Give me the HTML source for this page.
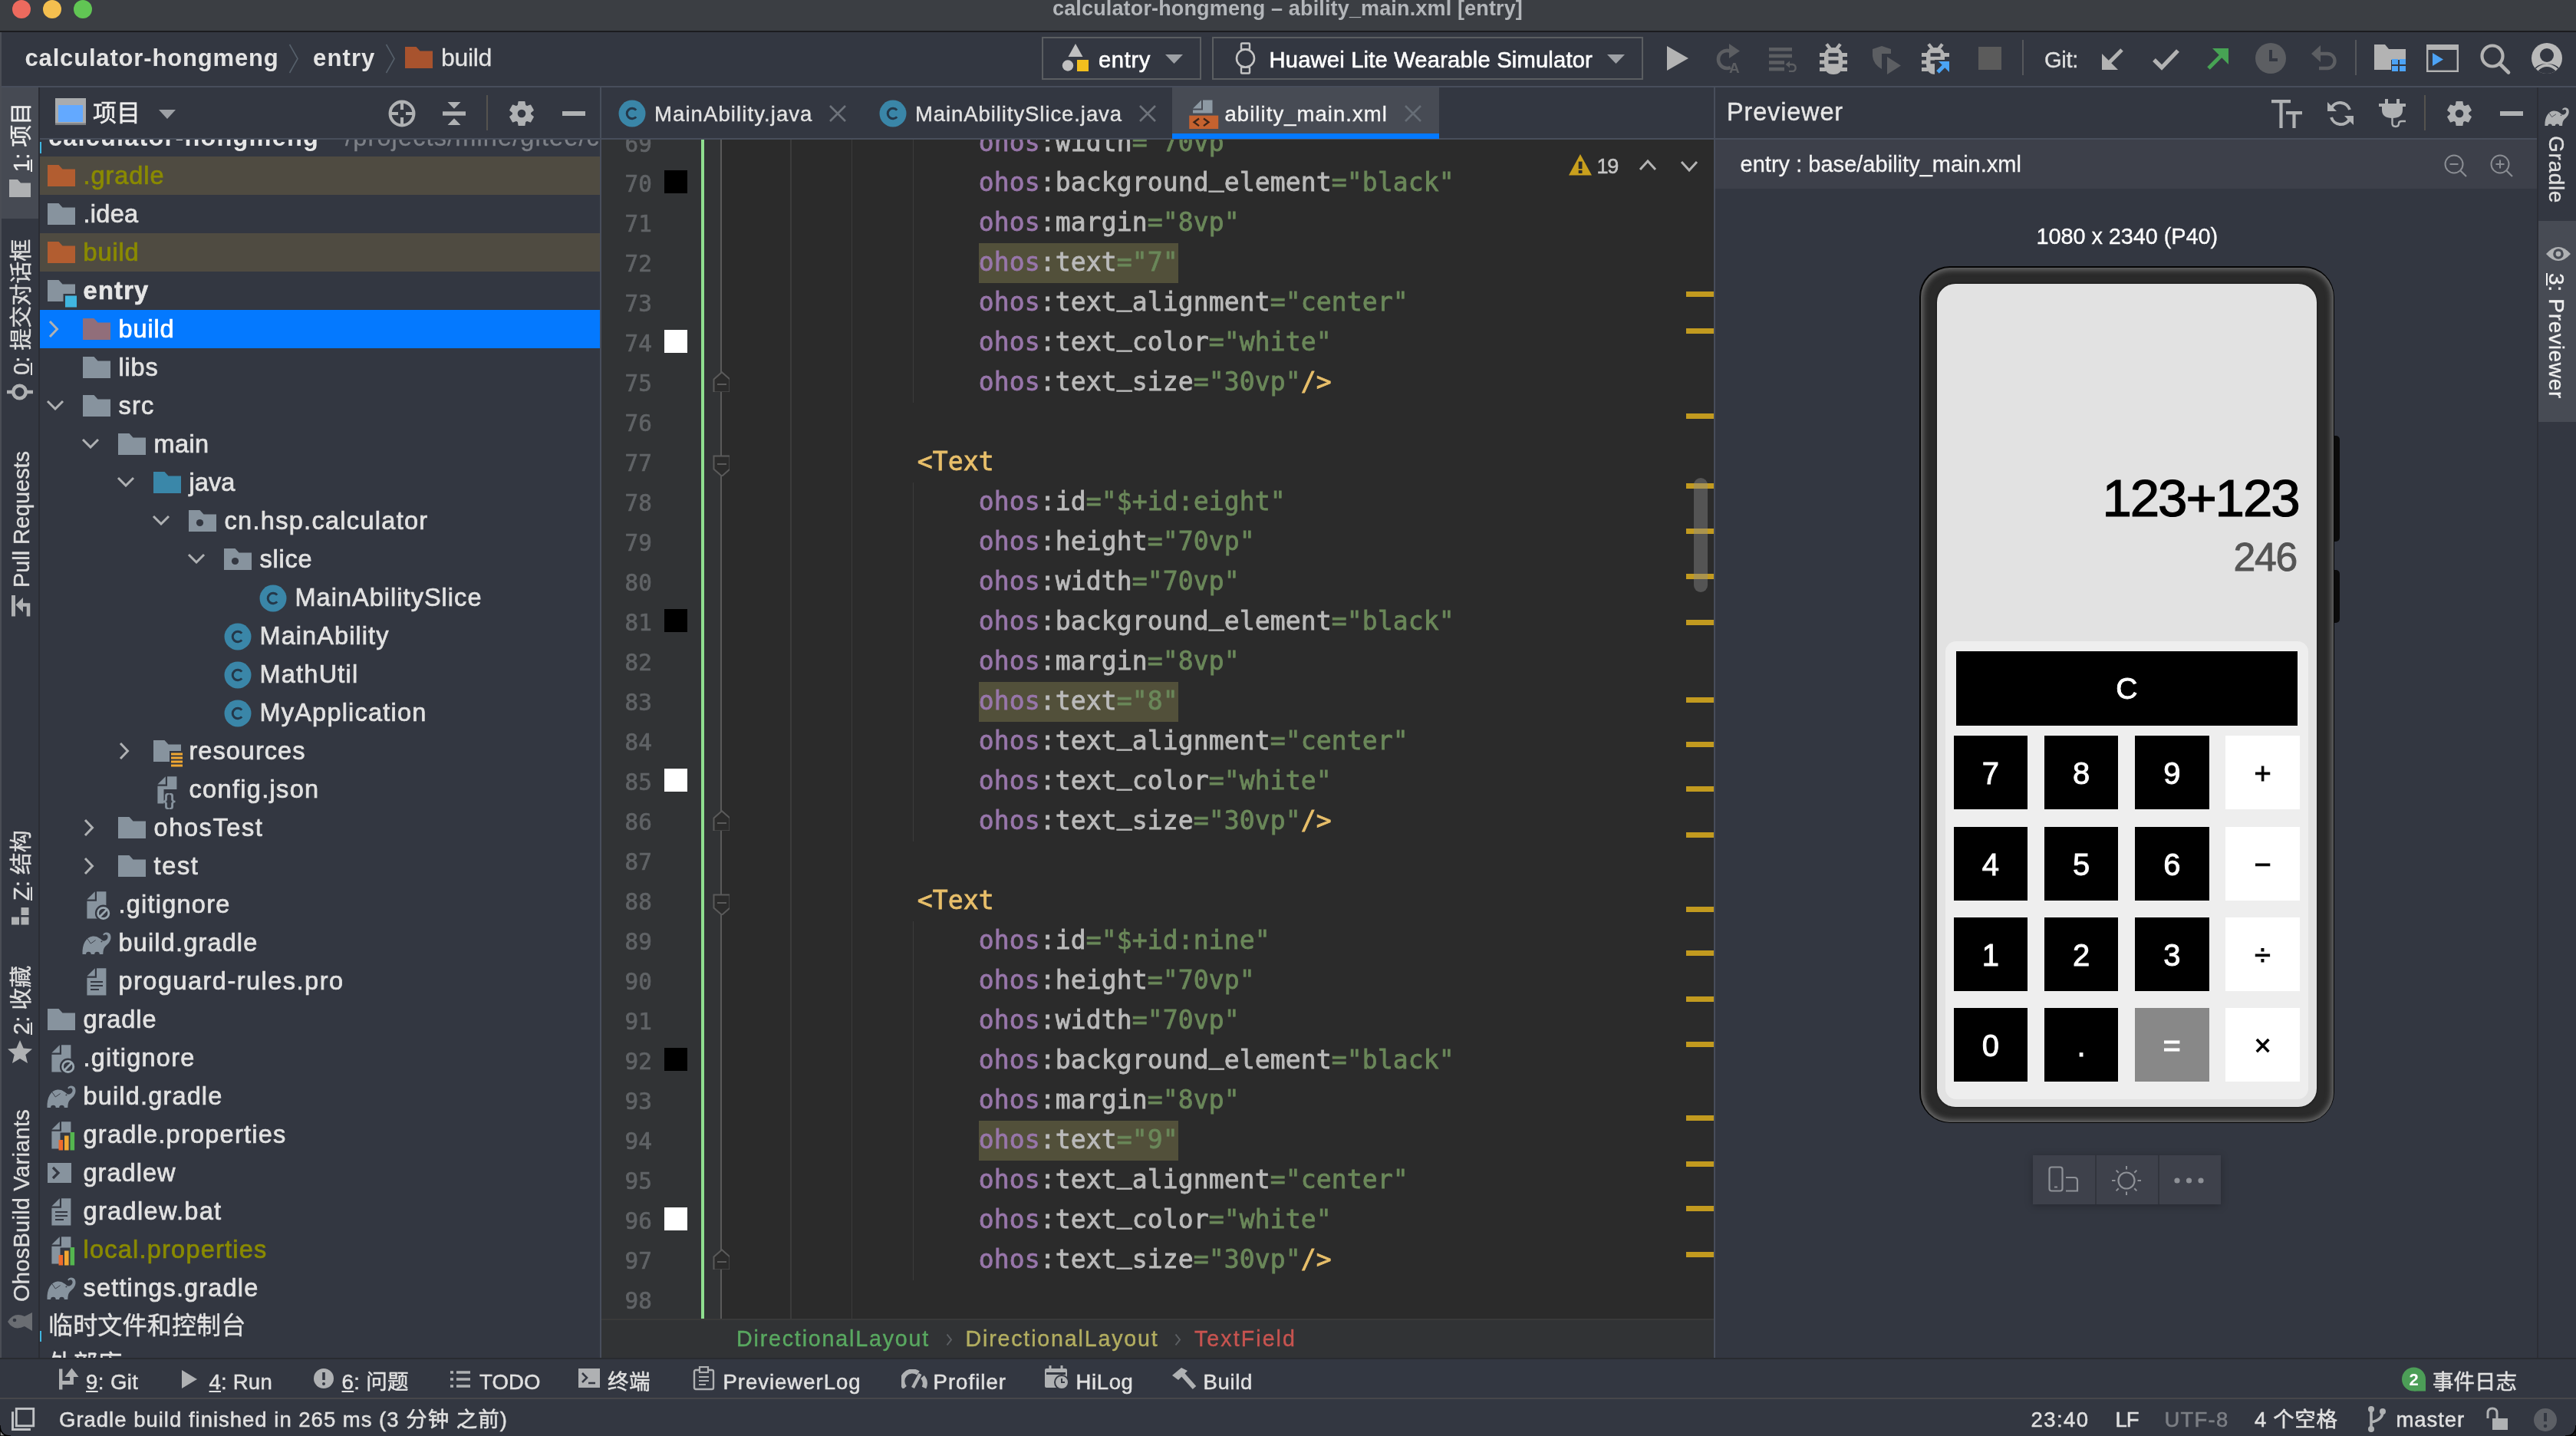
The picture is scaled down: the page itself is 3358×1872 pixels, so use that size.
<!DOCTYPE html>
<html lang="zh-CN"><head><meta charset="utf-8"><title>calculator-hongmeng – ability_main.xml [entry]</title>
<style>
html,body{margin:0;padding:0;background:#333741;}
body{width:3358px;height:1872px;position:relative;overflow:hidden;font-family:'Liberation Sans','Noto Sans CJK SC',sans-serif;will-change:transform;}
div,span,svg{position:absolute;display:block;}
span{white-space:pre;}
span span{position:static;display:inline;}
</style></head><body>
<div style="left:0px;top:0px;width:3358px;height:40px;background:#3b3e43;"></div>
<div style="left:0px;top:40px;width:3358px;height:2px;background:#1b1c1f;"></div>
<div style="left:16px;top:0px;width:24px;height:24px;background:#ec6a5e;border-radius:50%"></div>
<div style="left:56px;top:0px;width:24px;height:24px;background:#f4bf4f;border-radius:50%"></div>
<div style="left:96px;top:0px;width:24px;height:24px;background:#61c554;border-radius:50%"></div>
<span style="letter-spacing:0.149px;left:1372px;top:-7.355499999999999px;font:700 27px/37px 'Liberation Sans','Noto Sans CJK SC',sans-serif;color:#b3b6ba;">calculator-hongmeng – ability_main.xml [entry]</span>
<div style="left:0px;top:42px;width:3358px;height:70px;background:#333741;"></div>
<div style="left:0px;top:112px;width:3358px;height:2px;background:#484e5b;"></div>
<div style="left:0px;top:114px;width:3358px;height:1758px;background:#333741;"></div>
<span style="letter-spacing:0.831px;left:32.5px;top:53.658500000000004px;font:700 31px/43px 'Liberation Sans','Noto Sans CJK SC',sans-serif;color:#e4e4e4;">calculator-hongmeng</span>
<svg style="left:376px;top:56px;" width="14" height="42" viewBox="0 0 14 42"><path d="M1.5 2 L12 20.5 L1.5 39" fill="none" stroke="#56606b" stroke-width="1.6"/></svg>
<span style="letter-spacing:1.137px;left:408px;top:53.658500000000004px;font:700 31px/43px 'Liberation Sans','Noto Sans CJK SC',sans-serif;color:#e4e4e4;">entry</span>
<svg style="left:502px;top:56px;" width="14" height="42" viewBox="0 0 14 42"><path d="M1.5 2 L12 20.5 L1.5 39" fill="none" stroke="#56606b" stroke-width="1.6"/></svg>
<svg style="left:528px;top:61px;" width="36" height="28" viewBox="0 0 36 28"><path d="M0 0 H14.5 L19.5 5.5 H36 V28 H0 Z" fill="#a8532e"/></svg>
<span style="letter-spacing:-0.322px;left:575px;top:52.81200000000001px;font:400 32px/44px 'Liberation Sans','Noto Sans CJK SC',sans-serif;color:#e4e4e4;-webkit-text-stroke:0.3px;">build</span>
<div style="left:1358px;top:48px;width:204px;height:52px;border:2px solid #5b5e61;background:#333741"></div>
<svg style="left:1382px;top:56px;" width="40" height="40" viewBox="0 0 40 40"><path d="M20 1 L29.5 18 H10.5 Z" fill="#c0c0c0"/><circle cx="10" cy="29.5" r="7.2" fill="#c0c0c0"/><rect x="22" y="22" width="15" height="15" fill="#f2bf1e"/></svg>
<span style="letter-spacing:0.622px;left:1432px;top:57.682199999999995px;font:400 29.2px/40px 'Liberation Sans','Noto Sans CJK SC',sans-serif;color:#ffffff;-webkit-text-stroke:0.6px;">entry</span>
<svg style="left:1519px;top:71px;" width="23" height="12" viewBox="0 0 23 12"><path d="M0 0 H23 L11.5 12 Z" fill="#9da0a5"/></svg>
<div style="left:1580px;top:48px;width:558px;height:52px;border:2px solid #5b5e61;background:#333741"></div>
<svg style="left:1608px;top:55px;" width="32" height="42" viewBox="0 0 32 42"><rect x="10" y="1.5" width="11" height="8" rx="1" fill="none" stroke="#c4c4c4" stroke-width="2.4"/><rect x="10" y="32.5" width="11" height="8" rx="1" fill="none" stroke="#c4c4c4" stroke-width="2.4"/><circle cx="15.5" cy="21" r="11.5" fill="#333741" stroke="#c4c4c4" stroke-width="2.6"/></svg>
<span style="letter-spacing:0.170px;left:1654.5px;top:57.682199999999995px;font:400 29.2px/40px 'Liberation Sans','Noto Sans CJK SC',sans-serif;color:#ffffff;-webkit-text-stroke:0.6px;">Huawei Lite Wearable Simulator</span>
<svg style="left:2095px;top:71px;" width="23" height="12" viewBox="0 0 23 12"><path d="M0 0 H23 L11.5 12 Z" fill="#9da0a5"/></svg>
<svg style="left:2172px;top:59px;" width="30" height="34" viewBox="0 0 30 34"><path d="M1 1 L29 17 L1 33 Z" fill="#b3b3b3"/></svg>
<svg style="left:2235px;top:57px;" width="38" height="38" viewBox="0 0 38 38"><path d="M20 9.5 A11.5 11.5 0 1 0 21 31" fill="none" stroke="#5c5e62" stroke-width="4.6"/><path d="M19 0 L33 9.5 L19 19 Z" fill="#5c5e62"/><text x="19" y="38" font-family="Liberation Sans" font-weight="700" font-size="19" fill="#5c5e62">A</text></svg>
<svg style="left:2306px;top:62px;" width="38" height="32" viewBox="0 0 38 32"><rect x="0" y="0" width="30" height="4.6" fill="#5c5e62"/><rect x="0" y="8.6" width="30" height="4.6" fill="#5c5e62"/><rect x="0" y="17.2" width="20" height="4.6" fill="#5c5e62"/><rect x="0" y="25.8" width="20" height="4.6" fill="#5c5e62"/><path d="M25 22 H31 A4.6 4.6 0 0 1 31 31 H26" fill="none" stroke="#5c5e62" stroke-width="2.4"/><path d="M27 17.5 L21.5 22 L27 26.5 Z" fill="#5c5e62"/></svg>
<svg style="left:2372px;top:56px;" width="40" height="42" viewBox="0 0 40 42"><path d="M9 1.5 L14.5 8.5 M27 1.5 L21.5 8.5" stroke="#b3b3b3" stroke-width="4.4" fill="none"/>
<path d="M6 18 Q6 6 18 6 Q30 6 30 18 V27 Q30 41 18 41 Q6 41 6 27 Z" fill="#b3b3b3"/>
<path d="M0 15.5 H8 M0 25 H8 M0 34.5 H8 M28 15.5 H36 M28 25 H36 M28 34.5 H36" stroke="#b3b3b3" stroke-width="5"/>
<rect x="11.5" y="13.2" width="13" height="4.6" fill="#333741"/><rect x="11.5" y="22.6" width="13" height="4.6" fill="#333741"/></svg>
<svg style="left:2440px;top:60px;" width="40" height="38" viewBox="0 0 40 38"><path d="M1 4 L13 0 L25 4 V10 H13 V30 Q2 24 1 13 Z" fill="#5c5e62"/><path d="M20 14 L38 25.5 L20 37 Z" fill="#5c5e62"/></svg>
<svg style="left:2505px;top:56px;" width="40" height="42" viewBox="0 0 40 42"><path d="M9 1.5 L14.5 8.5 M27 1.5 L21.5 8.5" stroke="#b3b3b3" stroke-width="4.4" fill="none"/>
<path d="M6 18 Q6 6 18 6 Q30 6 30 18 V27 Q30 41 18 41 Q6 41 6 27 Z" fill="#b3b3b3"/>
<path d="M0 15.5 H8 M0 25 H8 M0 34.5 H8 M28 15.5 H36 M28 25 H36 M28 34.5 H36" stroke="#b3b3b3" stroke-width="5"/>
<rect x="11.5" y="13.2" width="13" height="4.6" fill="#333741"/><rect x="11.5" y="22.6" width="13" height="4.6" fill="#333741"/><rect x="17" y="22" width="22" height="22" fill="#333741"/><path d="M21 38 L30 29" fill="none" stroke="#4aa4f5" stroke-width="5"/><path d="M22 24 H36 V38 Z" fill="#4aa4f5"/></svg>
<div style="left:2579px;top:61px;width:30px;height:30px;background:#5b5b5b;"></div>
<div style="left:2636px;top:52px;width:2px;height:46px;background:#55575b;"></div>
<span style="letter-spacing:-0.352px;left:2665px;top:57.682199999999995px;font:400 29.2px/40px 'Liberation Sans','Noto Sans CJK SC',sans-serif;color:#e0e0e0;-webkit-text-stroke:0.3px;">Git:</span>
<svg style="left:2739px;top:62px;" width="30" height="30" viewBox="0 0 30 30"><path d="M27 3 L7 23" stroke="#b3b3b3" stroke-width="5" fill="none"/><path d="M1 8 V29 H22 Z" fill="#b3b3b3"/></svg>
<svg style="left:2806px;top:63px;" width="35" height="29" viewBox="0 0 35 29"><path d="M2 15 L12 25 L33 3" fill="none" stroke="#b3b3b3" stroke-width="5.4"/></svg>
<svg style="left:2876px;top:62px;" width="30" height="30" viewBox="0 0 30 30"><path d="M3 27 L23 7" stroke="#47a354" stroke-width="5" fill="none"/><path d="M8 1 H29 V22 Z" fill="#47a354"/></svg>
<svg style="left:2939px;top:55px;" width="42" height="42" viewBox="0 0 42 42"><circle cx="21" cy="21" r="20" fill="#5c5e62"/><path d="M21 10 V23 H30" fill="none" stroke="#333741" stroke-width="4"/></svg>
<svg style="left:3013px;top:59px;" width="34" height="34" viewBox="0 0 34 34"><path d="M8 11 H21 A9.5 9.5 0 0 1 21 30 H10" fill="none" stroke="#5c5e62" stroke-width="4.4"/><path d="M12 0 L0 11 L12 22 Z" fill="#5c5e62"/></svg>
<div style="left:3070px;top:52px;width:2px;height:46px;background:#55575b;"></div>
<svg style="left:3095px;top:58px;" width="42" height="36" viewBox="0 0 42 36"><path d="M0 0 H14 L19 6 H41 V20 H22 V33 H0 Z" fill="#b3b3b3"/><rect x="23" y="19" width="8" height="7" fill="#4da3f5"/><rect x="33" y="19" width="8" height="7" fill="#4da3f5"/><rect x="23" y="28" width="8" height="7" fill="#4da3f5"/><rect x="33" y="28" width="8" height="7" fill="#4da3f5"/></svg>
<svg style="left:3163px;top:58px;" width="42" height="36" viewBox="0 0 42 36"><rect x="1.2" y="1.2" width="39.6" height="33.6" fill="none" stroke="#b3b3b3" stroke-width="2.4"/><rect x="1" y="1" width="40" height="6" fill="#b3b3b3"/><path d="M8 11 L22 19.5 L8 28 Z" fill="#4da3f5"/></svg>
<svg style="left:3230px;top:56px;" width="44" height="42" viewBox="0 0 44 42"><circle cx="19" cy="17" r="13.5" fill="none" stroke="#b3b3b3" stroke-width="4.2"/><path d="M28.5 27 L40 38.5" stroke="#b3b3b3" stroke-width="4.6" stroke-linecap="round"/></svg>
<svg style="left:3299px;top:55px;" width="42" height="42" viewBox="0 0 42 42"><defs><clipPath id="avc"><circle cx="21" cy="21" r="20"/></clipPath></defs><circle cx="21" cy="21" r="20" fill="#b9b9b9"/><g clip-path="url(#avc)"><circle cx="21" cy="17" r="9" fill="#333741"/><path d="M1 44 Q3 28 21 28 Q39 28 41 44 Z" fill="#333741"/><path d="M8 36 Q21 24 34 36" fill="none" stroke="#b9b9b9" stroke-width="4"/></g></svg>
<div style="left:0px;top:114px;width:50px;height:1658px;background:#333741;"></div>
<div style="left:50px;top:114px;width:2px;height:1658px;background:#2a2c33;"></div>
<div style="left:0px;top:114px;width:50px;height:171px;background:#464a53;"></div>
<div style="left:0px;top:42px;width:2px;height:1830px;background:#4a4d55;"></div>
<span style="left:10px;top:224px;font:400 29px/37px 'Liberation Sans','Noto Sans CJK SC',sans-serif;color:#ececec;transform-origin:0 0;transform:rotate(-90deg);-webkit-text-stroke:0.35px;"><u>1</u>: 项目</span>
<svg style="left:12px;top:234px;" width="28" height="23" viewBox="0 0 28 23"><path d="M0 0 H11 L15 4.5 H28 V23 H0 Z" fill="#afb1b3"/></svg>
<span style="left:10px;top:489px;font:400 29px/37px 'Liberation Sans','Noto Sans CJK SC',sans-serif;color:#dcdcdc;transform-origin:0 0;transform:rotate(-90deg);-webkit-text-stroke:0.35px;"><u>0</u>: 提交对话框</span>
<svg style="left:9px;top:495px;" width="34" height="32" viewBox="0 0 34 32"><path d="M0 16 H34" stroke="#afb1b3" stroke-width="4.4"/><circle cx="16.5" cy="16" r="8.2" fill="#333741" stroke="#afb1b3" stroke-width="4.6"/></svg>
<span style="letter-spacing:-0.072px;left:10px;top:766px;font:400 29px/37px 'Liberation Sans','Noto Sans CJK SC',sans-serif;color:#dcdcdc;transform-origin:0 0;transform:rotate(-90deg);-webkit-text-stroke:0.35px;">Pull Requests</span>
<svg style="left:15px;top:776px;" width="25" height="28" viewBox="0 0 25 28"><rect x="0" y="0" width="5" height="27.5" fill="#afb1b3"/><path d="M22 27.5 V12.5 H14" fill="none" stroke="#afb1b3" stroke-width="4.6"/><path d="M15 3 V22 L5.5 12.5 Z" fill="#afb1b3"/></svg>
<span style="left:10px;top:1174px;font:400 29px/37px 'Liberation Sans','Noto Sans CJK SC',sans-serif;color:#dcdcdc;transform-origin:0 0;transform:rotate(-90deg);-webkit-text-stroke:0.35px;"><u>Z</u>: 结构</span>
<svg style="left:15px;top:1183px;" width="24" height="24" viewBox="0 0 24 24"><rect x="12.5" y="0" width="10" height="10" fill="#afb1b3"/><rect x="0" y="12.5" width="10" height="10" fill="#afb1b3"/><rect x="12.5" y="12.5" width="10" height="10" fill="#afb1b3"/></svg>
<span style="left:10px;top:1349px;font:400 29px/37px 'Liberation Sans','Noto Sans CJK SC',sans-serif;color:#dcdcdc;transform-origin:0 0;transform:rotate(-90deg);-webkit-text-stroke:0.35px;"><u>2</u>: 收藏</span>
<svg style="left:10px;top:1356px;" width="32" height="30" viewBox="0 0 32 30"><path d="M16 0 L20.6 10.5 L32 11.5 L23.3 19 L26 30 L16 24 L6 30 L8.7 19 L0 11.5 L11.4 10.5 Z" fill="#afb1b3"/></svg>
<span style="letter-spacing:0.273px;left:10px;top:1697px;font:400 29px/37px 'Liberation Sans','Noto Sans CJK SC',sans-serif;color:#dcdcdc;transform-origin:0 0;transform:rotate(-90deg);-webkit-text-stroke:0.35px;">OhosBuild Variants</span>
<svg style="left:8px;top:1708px;" width="36" height="30" viewBox="0 0 36 30"><path d="M2 15 Q10 2 24 8 L34 3 V27 L24 21 Q10 28 2 15 Z" fill="#6a6d72"/><circle cx="11" cy="13" r="2.3" fill="#333741"/></svg>
<div style="left:782px;top:114px;width:2px;height:1658px;background:#484e5b;"></div>
<div style="left:52px;top:180px;width:730px;height:2px;background:#484e5b;"></div>
<svg style="left:72px;top:128px;" width="40" height="35" viewBox="0 0 40 35"><rect x="0" y="0" width="40" height="35" fill="#a9abad"/><rect x="4" y="9" width="32" height="22" fill="#63a9ff"/><rect x="0" y="32.5" width="40" height="2.5" fill="#7c7e81"/></svg>
<span style="left:121px;top:126.0px;font:400 31px/43px 'Liberation Sans','Noto Sans CJK SC',sans-serif;color:#ececec;-webkit-text-stroke:0.5px;">项目</span>
<svg style="left:207px;top:143px;" width="22" height="12" viewBox="0 0 22 12"><path d="M0 0 H22 L11.0 12 Z" fill="#9da0a5"/></svg>
<svg style="left:506px;top:130px;" width="36" height="36" viewBox="0 0 36 36"><circle cx="18" cy="18" r="15.4" fill="none" stroke="#afb1b3" stroke-width="4.1"/><path d="M18 3 V13 M18 23 V33 M3 18 H13 M23 18 H33" stroke="#afb1b3" stroke-width="4.1"/></svg>
<svg style="left:577px;top:132px;" width="30" height="32" viewBox="0 0 30 32"><path d="M6.5 1 H23.5 L15 9.8 Z M6.5 31 H23.5 L15 22.2 Z" fill="#afb1b3"/><rect x="0" y="13.3" width="30" height="5.4" fill="#afb1b3"/></svg>
<div style="left:634px;top:124px;width:2px;height:46px;background:#55534f;"></div>
<svg style="left:663.8px;top:132.1px;" width="32" height="32" viewBox="0 0 32 32"><path d="M12.34 0.73 L19.66 0.73 L20.44 5.50 L22.87 6.91 L27.40 5.20 L31.05 11.53 L27.31 14.59 L27.31 17.41 L31.05 20.47 L27.40 26.80 L22.87 25.09 L20.44 26.50 L19.66 31.27 L12.34 31.27 L11.56 26.50 L9.13 25.09 L4.60 26.80 L0.95 20.47 L4.69 17.41 L4.69 14.59 L0.95 11.53 L4.60 5.20 L9.13 6.91 L11.56 5.50 Z" fill="#afb1b3" stroke="#afb1b3" stroke-width="1.6" stroke-linejoin="round"/><circle cx="16" cy="16" r="5.3" fill="#333741"/></svg>
<div style="left:733px;top:145.2px;width:30px;height:5.5px;background:#afb1b3;"></div>
<div style="left:52px;top:182px;width:730px;height:1590px;overflow:hidden">
<span style="letter-spacing:1.187px;left:11px;top:-25.061249999999994px;font:700 32.5px/45px 'Liberation Sans','Noto Sans CJK SC',sans-serif;color:#e6e6e6;">calculator-hongmeng</span>
<span style="letter-spacing:1.127px;left:378px;top:-25.061249999999994px;font:400 32.5px/45px 'Liberation Sans','Noto Sans CJK SC',sans-serif;color:#7d8087;-webkit-text-stroke:0.3px;">~/projects/mine/gitee/c</span>
<div style="left:0px;top:22px;width:730px;height:50px;background:#4f4b41;"></div>
<svg style="left:10px;top:33px;" width="36" height="28" viewBox="0 0 36 28"><path d="M0 0 H14.5 L19.5 5.5 H36 V28 H0 Z" fill="#b25d30"/></svg>
<span style="letter-spacing:0.946px;left:56.5px;top:24.938750000000006px;font:400 32.5px/45px 'Liberation Sans','Noto Sans CJK SC',sans-serif;color:#8a8a00;-webkit-text-stroke:0.7px;">.gradle</span>
<svg style="left:10px;top:83px;" width="36" height="28" viewBox="0 0 36 28"><path d="M0 0 H14.5 L19.5 5.5 H36 V28 H0 Z" fill="#87939e"/></svg>
<span style="letter-spacing:0.303px;left:56.5px;top:74.93875px;font:400 32.5px/45px 'Liberation Sans','Noto Sans CJK SC',sans-serif;color:#e2e2e2;-webkit-text-stroke:0.7px;">.idea</span>
<div style="left:0px;top:122px;width:730px;height:50px;background:#4f4b41;"></div>
<svg style="left:10px;top:133px;" width="36" height="28" viewBox="0 0 36 28"><path d="M0 0 H14.5 L19.5 5.5 H36 V28 H0 Z" fill="#b25d30"/></svg>
<span style="letter-spacing:0.866px;left:56.5px;top:124.93875px;font:400 32.5px/45px 'Liberation Sans','Noto Sans CJK SC',sans-serif;color:#8a8a00;-webkit-text-stroke:0.7px;">build</span>
<svg style="left:10px;top:183px;" width="40" height="36" viewBox="0 0 40 36"><path d="M0 0 H14.5 L19.5 5.5 H36 V18 H20.5 V28 H0 Z" fill="#87939e"/><rect x="23" y="20.5" width="15" height="15" fill="#40b6e0"/></svg>
<span style="letter-spacing:1.303px;left:56.5px;top:174.93875px;font:700 32.5px/45px 'Liberation Sans','Noto Sans CJK SC',sans-serif;color:#e6e6e6;-webkit-text-stroke:0.7px;">entry</span>
<div style="left:0px;top:222px;width:730px;height:50px;background:#0479ff;"></div>
<svg style="left:11px;top:235px;" width="14" height="24" viewBox="0 0 14 24"><path d="M2 2 L11.5 12 L2 22" fill="none" stroke="#afb1b3" stroke-width="3"/></svg>
<svg style="left:56px;top:233px;" width="36" height="28" viewBox="0 0 36 28"><path d="M0 0 H14.5 L19.5 5.5 H36 V28 H0 Z" fill="#916e7a"/></svg>
<span style="letter-spacing:0.866px;left:102.5px;top:224.93875px;font:400 32.5px/45px 'Liberation Sans','Noto Sans CJK SC',sans-serif;color:#ffffff;-webkit-text-stroke:0.7px;">build</span>
<svg style="left:56px;top:283px;" width="36" height="28" viewBox="0 0 36 28"><path d="M0 0 H14.5 L19.5 5.5 H36 V28 H0 Z" fill="#87939e"/></svg>
<span style="letter-spacing:0.805px;left:102.5px;top:274.93874999999997px;font:400 32.5px/45px 'Liberation Sans','Noto Sans CJK SC',sans-serif;color:#e2e2e2;-webkit-text-stroke:0.7px;">libs</span>
<svg style="left:8px;top:338.5px;" width="24" height="14" viewBox="0 0 24 14"><path d="M2 2 L12 12 L22 2" fill="none" stroke="#afb1b3" stroke-width="3"/></svg>
<svg style="left:56px;top:333px;" width="36" height="28" viewBox="0 0 36 28"><path d="M0 0 H14.5 L19.5 5.5 H36 V28 H0 Z" fill="#87939e"/></svg>
<span style="letter-spacing:1.224px;left:102.5px;top:324.93874999999997px;font:400 32.5px/45px 'Liberation Sans','Noto Sans CJK SC',sans-serif;color:#e2e2e2;-webkit-text-stroke:0.7px;">src</span>
<svg style="left:54px;top:388.5px;" width="24" height="14" viewBox="0 0 24 14"><path d="M2 2 L12 12 L22 2" fill="none" stroke="#afb1b3" stroke-width="3"/></svg>
<svg style="left:102px;top:383px;" width="36" height="28" viewBox="0 0 36 28"><path d="M0 0 H14.5 L19.5 5.5 H36 V28 H0 Z" fill="#87939e"/></svg>
<span style="letter-spacing:0.387px;left:148.5px;top:374.93874999999997px;font:400 32.5px/45px 'Liberation Sans','Noto Sans CJK SC',sans-serif;color:#e2e2e2;-webkit-text-stroke:0.7px;">main</span>
<svg style="left:100px;top:438.5px;" width="24" height="14" viewBox="0 0 24 14"><path d="M2 2 L12 12 L22 2" fill="none" stroke="#afb1b3" stroke-width="3"/></svg>
<svg style="left:148px;top:433px;" width="36" height="28" viewBox="0 0 36 28"><path d="M0 0 H14.5 L19.5 5.5 H36 V28 H0 Z" fill="#3a87a9"/></svg>
<span style="letter-spacing:0.094px;left:194.5px;top:424.93874999999997px;font:400 32.5px/45px 'Liberation Sans','Noto Sans CJK SC',sans-serif;color:#e2e2e2;-webkit-text-stroke:0.7px;">java</span>
<svg style="left:146px;top:488.5px;" width="24" height="14" viewBox="0 0 24 14"><path d="M2 2 L12 12 L22 2" fill="none" stroke="#afb1b3" stroke-width="3"/></svg>
<svg style="left:194px;top:483px;" width="36" height="28" viewBox="0 0 36 28"><path d="M0 0 H14.5 L19.5 5.5 H36 V28 H0 Z" fill="#87939e"/><circle cx="14.5" cy="16.5" r="4.6" fill="#333741"/></svg>
<span style="letter-spacing:1.301px;left:240.5px;top:474.93874999999997px;font:400 32.5px/45px 'Liberation Sans','Noto Sans CJK SC',sans-serif;color:#e2e2e2;-webkit-text-stroke:0.7px;">cn.hsp.calculator</span>
<svg style="left:192px;top:538.5px;" width="24" height="14" viewBox="0 0 24 14"><path d="M2 2 L12 12 L22 2" fill="none" stroke="#afb1b3" stroke-width="3"/></svg>
<svg style="left:240px;top:533px;" width="36" height="28" viewBox="0 0 36 28"><path d="M0 0 H14.5 L19.5 5.5 H36 V28 H0 Z" fill="#87939e"/><circle cx="14.5" cy="16.5" r="4.6" fill="#333741"/></svg>
<span style="letter-spacing:0.794px;left:286.5px;top:524.93875px;font:400 32.5px/45px 'Liberation Sans','Noto Sans CJK SC',sans-serif;color:#e2e2e2;-webkit-text-stroke:0.7px;">slice</span>
<svg style="left:286px;top:580px;" width="36" height="36" viewBox="0 0 36 36"><circle cx="18" cy="18" r="17.5" fill="#3a86a8"/><path d="M23.2 13.6 A6.8 6.8 0 1 0 23.2 22.4" fill="none" stroke="#24384a" stroke-width="3"/></svg>
<span style="letter-spacing:1.025px;left:332.5px;top:574.93875px;font:400 32.5px/45px 'Liberation Sans','Noto Sans CJK SC',sans-serif;color:#e2e2e2;-webkit-text-stroke:0.7px;">MainAbilitySlice</span>
<svg style="left:240px;top:630px;" width="36" height="36" viewBox="0 0 36 36"><circle cx="18" cy="18" r="17.5" fill="#3a86a8"/><path d="M23.2 13.6 A6.8 6.8 0 1 0 23.2 22.4" fill="none" stroke="#24384a" stroke-width="3"/></svg>
<span style="letter-spacing:1.078px;left:286.5px;top:624.93875px;font:400 32.5px/45px 'Liberation Sans','Noto Sans CJK SC',sans-serif;color:#e2e2e2;-webkit-text-stroke:0.7px;">MainAbility</span>
<svg style="left:240px;top:680px;" width="36" height="36" viewBox="0 0 36 36"><circle cx="18" cy="18" r="17.5" fill="#3a86a8"/><path d="M23.2 13.6 A6.8 6.8 0 1 0 23.2 22.4" fill="none" stroke="#24384a" stroke-width="3"/></svg>
<span style="letter-spacing:1.225px;left:286.5px;top:674.93875px;font:400 32.5px/45px 'Liberation Sans','Noto Sans CJK SC',sans-serif;color:#e2e2e2;-webkit-text-stroke:0.7px;">MathUtil</span>
<svg style="left:240px;top:730px;" width="36" height="36" viewBox="0 0 36 36"><circle cx="18" cy="18" r="17.5" fill="#3a86a8"/><path d="M23.2 13.6 A6.8 6.8 0 1 0 23.2 22.4" fill="none" stroke="#24384a" stroke-width="3"/></svg>
<span style="letter-spacing:1.206px;left:286.5px;top:724.93875px;font:400 32.5px/45px 'Liberation Sans','Noto Sans CJK SC',sans-serif;color:#e2e2e2;-webkit-text-stroke:0.7px;">MyApplication</span>
<svg style="left:103px;top:785px;" width="14" height="24" viewBox="0 0 14 24"><path d="M2 2 L11.5 12 L2 22" fill="none" stroke="#afb1b3" stroke-width="3"/></svg>
<svg style="left:148px;top:783px;" width="40" height="36" viewBox="0 0 40 36"><path d="M0 0 H14.5 L19.5 5.5 H36 V14 H21 V28 H0 Z" fill="#87939e"/><path d="M23 18 H38 M23 23 H38 M23 28 H38 M23 33 H38" stroke="#f0a732" stroke-width="3"/></svg>
<span style="letter-spacing:1.033px;left:194.5px;top:774.93875px;font:400 32.5px/45px 'Liberation Sans','Noto Sans CJK SC',sans-serif;color:#e2e2e2;-webkit-text-stroke:0.7px;">resources</span>
<svg style="left:148px;top:822px;" width="42" height="52" viewBox="0 0 42 52"><path d="M5.4 18.6 L15.8 8.2 V18.6 Z" fill="#87939e"/><path d="M18 8.2 H30.4 V25 H13.5 V43.6 H5.4 V20.8 H18 Z" fill="#87939e"/><text x="12.2" y="45.5" font-family="Liberation Sans" font-weight="700" font-size="22" letter-spacing="-0.5" fill="#87939e">{}</text></svg>
<span style="letter-spacing:1.330px;left:194.5px;top:824.93875px;font:400 32.5px/45px 'Liberation Sans','Noto Sans CJK SC',sans-serif;color:#e2e2e2;-webkit-text-stroke:0.7px;">config.json</span>
<svg style="left:57px;top:885px;" width="14" height="24" viewBox="0 0 14 24"><path d="M2 2 L11.5 12 L2 22" fill="none" stroke="#afb1b3" stroke-width="3"/></svg>
<svg style="left:102px;top:883px;" width="36" height="28" viewBox="0 0 36 28"><path d="M0 0 H14.5 L19.5 5.5 H36 V28 H0 Z" fill="#87939e"/></svg>
<span style="letter-spacing:1.613px;left:148.5px;top:874.93875px;font:400 32.5px/45px 'Liberation Sans','Noto Sans CJK SC',sans-serif;color:#e2e2e2;-webkit-text-stroke:0.7px;">ohosTest</span>
<svg style="left:57px;top:935px;" width="14" height="24" viewBox="0 0 14 24"><path d="M2 2 L11.5 12 L2 22" fill="none" stroke="#afb1b3" stroke-width="3"/></svg>
<svg style="left:102px;top:933px;" width="36" height="28" viewBox="0 0 36 28"><path d="M0 0 H14.5 L19.5 5.5 H36 V28 H0 Z" fill="#87939e"/></svg>
<span style="letter-spacing:1.652px;left:148.5px;top:924.93875px;font:400 32.5px/45px 'Liberation Sans','Noto Sans CJK SC',sans-serif;color:#e2e2e2;-webkit-text-stroke:0.7px;">test</span>
<svg style="left:56px;top:972px;" width="42" height="52" viewBox="0 0 42 52"><path d="M5.4 18.6 L15.8 8.2 V18.6 Z" fill="#87939e"/><path d="M18 8.2 H30.4 V43.6 H5.4 V20.8 H18 Z" fill="#87939e"/><circle cx="26.7" cy="36.4" r="10.8" fill="#333741"/><circle cx="26.7" cy="36.4" r="7.1" fill="none" stroke="#9aa7b0" stroke-width="2.8"/><path d="M21.9 41.2 L31.5 31.6" stroke="#9aa7b0" stroke-width="2.8"/></svg>
<span style="letter-spacing:1.230px;left:102.5px;top:974.93875px;font:400 32.5px/45px 'Liberation Sans','Noto Sans CJK SC',sans-serif;color:#e2e2e2;-webkit-text-stroke:0.7px;">.gitignore</span>
<svg style="left:55px;top:1032.2px;" width="38.5" height="30.5" viewBox="0 -1 38.5 30.5"><path d="M0.5 29 C0 16 5 6.5 14 5.5 C20 5 24 9 27 11.5 C31 12.2 34 9 33.5 5.8 C33 2.8 29.8 2.6 28.6 4.6 L27.2 3.4 C28.5 -0.3 35 -0.8 37 3.8 C39 10 35 15 30.5 18.5 C28 21 27.5 24 27.3 29 L22.8 29 A3.3 3.3 0 0 0 16.2 29 L11.7 29 A3.3 3.3 0 0 0 5.1 29 Z" fill="#87939e"/><circle cx="25.4" cy="12.4" r="0.95" fill="#333741"/><path d="M7 8.8 L11.3 15 L17.6 10.6" fill="none" stroke="#333741" stroke-width="0.9"/></svg>
<span style="letter-spacing:1.163px;left:102.5px;top:1024.93875px;font:400 32.5px/45px 'Liberation Sans','Noto Sans CJK SC',sans-serif;color:#e2e2e2;-webkit-text-stroke:0.7px;">build.gradle</span>
<svg style="left:56px;top:1072px;" width="42" height="52" viewBox="0 0 42 52"><path d="M5.4 18.6 L15.8 8.2 V18.6 Z" fill="#87939e"/><path d="M18 8.2 H30.4 V43.6 H5.4 V20.8 H18 Z" fill="#87939e"/><path d="M10 26 H26 M10 31 H26 M10 36 H21" stroke="#333741" stroke-width="2.2"/></svg>
<span style="letter-spacing:1.479px;left:102.5px;top:1074.93875px;font:400 32.5px/45px 'Liberation Sans','Noto Sans CJK SC',sans-serif;color:#e2e2e2;-webkit-text-stroke:0.7px;">proguard-rules.pro</span>
<svg style="left:10px;top:1133px;" width="36" height="28" viewBox="0 0 36 28"><path d="M0 0 H14.5 L19.5 5.5 H36 V28 H0 Z" fill="#87939e"/></svg>
<span style="letter-spacing:0.943px;left:56.5px;top:1124.93875px;font:400 32.5px/45px 'Liberation Sans','Noto Sans CJK SC',sans-serif;color:#e2e2e2;-webkit-text-stroke:0.7px;">gradle</span>
<svg style="left:10px;top:1172px;" width="42" height="52" viewBox="0 0 42 52"><path d="M5.4 18.6 L15.8 8.2 V18.6 Z" fill="#87939e"/><path d="M18 8.2 H30.4 V43.6 H5.4 V20.8 H18 Z" fill="#87939e"/><circle cx="26.7" cy="36.4" r="10.8" fill="#333741"/><circle cx="26.7" cy="36.4" r="7.1" fill="none" stroke="#9aa7b0" stroke-width="2.8"/><path d="M21.9 41.2 L31.5 31.6" stroke="#9aa7b0" stroke-width="2.8"/></svg>
<span style="letter-spacing:1.230px;left:56.5px;top:1174.93875px;font:400 32.5px/45px 'Liberation Sans','Noto Sans CJK SC',sans-serif;color:#e2e2e2;-webkit-text-stroke:0.7px;">.gitignore</span>
<svg style="left:9px;top:1232.2px;" width="38.5" height="30.5" viewBox="0 -1 38.5 30.5"><path d="M0.5 29 C0 16 5 6.5 14 5.5 C20 5 24 9 27 11.5 C31 12.2 34 9 33.5 5.8 C33 2.8 29.8 2.6 28.6 4.6 L27.2 3.4 C28.5 -0.3 35 -0.8 37 3.8 C39 10 35 15 30.5 18.5 C28 21 27.5 24 27.3 29 L22.8 29 A3.3 3.3 0 0 0 16.2 29 L11.7 29 A3.3 3.3 0 0 0 5.1 29 Z" fill="#87939e"/><circle cx="25.4" cy="12.4" r="0.95" fill="#333741"/><path d="M7 8.8 L11.3 15 L17.6 10.6" fill="none" stroke="#333741" stroke-width="0.9"/></svg>
<span style="letter-spacing:1.163px;left:56.5px;top:1224.93875px;font:400 32.5px/45px 'Liberation Sans','Noto Sans CJK SC',sans-serif;color:#e2e2e2;-webkit-text-stroke:0.7px;">build.gradle</span>
<svg style="left:10px;top:1272px;" width="42" height="52" viewBox="0 0 42 52"><path d="M5.4 18.6 L15.8 8.2 V18.6 Z" fill="#87939e"/><path d="M18 8.2 H30.4 V22.5 H16.5 V43.6 H5.4 V20.8 H18 Z" fill="#87939e"/><rect x="14.5" y="32" width="5.6" height="13.5" fill="#ee6b2d"/><rect x="22" y="26.5" width="5.6" height="19" fill="#f0a732"/><rect x="29.5" y="22" width="5.6" height="23.5" fill="#54b64f"/></svg>
<span style="letter-spacing:1.241px;left:56.5px;top:1274.93875px;font:400 32.5px/45px 'Liberation Sans','Noto Sans CJK SC',sans-serif;color:#e2e2e2;-webkit-text-stroke:0.7px;">gradle.properties</span>
<svg style="left:10px;top:1334px;" width="32" height="26" viewBox="0 0 32 26"><rect x="0" y="0" width="31" height="26" fill="#87939e"/><path d="M7 6 L14 13 L7 20" fill="none" stroke="#333741" stroke-width="3.2"/></svg>
<span style="letter-spacing:1.025px;left:56.5px;top:1324.93875px;font:400 32.5px/45px 'Liberation Sans','Noto Sans CJK SC',sans-serif;color:#e2e2e2;-webkit-text-stroke:0.7px;">gradlew</span>
<svg style="left:10px;top:1372px;" width="42" height="52" viewBox="0 0 42 52"><path d="M5.4 18.6 L15.8 8.2 V18.6 Z" fill="#87939e"/><path d="M18 8.2 H30.4 V43.6 H5.4 V20.8 H18 Z" fill="#87939e"/><path d="M10 26 H26 M10 31 H26 M10 36 H21" stroke="#333741" stroke-width="2.2"/></svg>
<span style="letter-spacing:1.342px;left:56.5px;top:1374.93875px;font:400 32.5px/45px 'Liberation Sans','Noto Sans CJK SC',sans-serif;color:#e2e2e2;-webkit-text-stroke:0.7px;">gradlew.bat</span>
<svg style="left:10px;top:1422px;" width="42" height="52" viewBox="0 0 42 52"><path d="M5.4 18.6 L15.8 8.2 V18.6 Z" fill="#87939e"/><path d="M18 8.2 H30.4 V22.5 H16.5 V43.6 H5.4 V20.8 H18 Z" fill="#87939e"/><rect x="14.5" y="32" width="5.6" height="13.5" fill="#ee6b2d"/><rect x="22" y="26.5" width="5.6" height="19" fill="#f0a732"/><rect x="29.5" y="22" width="5.6" height="23.5" fill="#54b64f"/></svg>
<span style="letter-spacing:1.226px;left:56.5px;top:1424.93875px;font:400 32.5px/45px 'Liberation Sans','Noto Sans CJK SC',sans-serif;color:#8a8a00;-webkit-text-stroke:0.7px;">local.properties</span>
<svg style="left:9px;top:1482.2px;" width="38.5" height="30.5" viewBox="0 -1 38.5 30.5"><path d="M0.5 29 C0 16 5 6.5 14 5.5 C20 5 24 9 27 11.5 C31 12.2 34 9 33.5 5.8 C33 2.8 29.8 2.6 28.6 4.6 L27.2 3.4 C28.5 -0.3 35 -0.8 37 3.8 C39 10 35 15 30.5 18.5 C28 21 27.5 24 27.3 29 L22.8 29 A3.3 3.3 0 0 0 16.2 29 L11.7 29 A3.3 3.3 0 0 0 5.1 29 Z" fill="#87939e"/><circle cx="25.4" cy="12.4" r="0.95" fill="#333741"/><path d="M7 8.8 L11.3 15 L17.6 10.6" fill="none" stroke="#333741" stroke-width="0.9"/></svg>
<span style="letter-spacing:1.174px;left:56.5px;top:1474.93875px;font:400 32.5px/45px 'Liberation Sans','Noto Sans CJK SC',sans-serif;color:#e2e2e2;-webkit-text-stroke:0.7px;">settings.gradle</span>
<span style="left:11px;top:1524.0px;font:400 32.2px/45px 'Liberation Sans','Noto Sans CJK SC',sans-serif;color:#e2e2e2;-webkit-text-stroke:0.35px;">临时文件和控制台</span>
<span style="left:11px;top:1574.0px;font:400 32.2px/45px 'Liberation Sans','Noto Sans CJK SC',sans-serif;color:#e2e2e2;-webkit-text-stroke:0.35px;">外部库</span>
<div style="left:0px;top:3px;width:2px;height:15px;background:#40b6e0;"></div>
<div style="left:0px;top:1553px;width:2px;height:14px;background:#40b6e0;"></div>
</div>
<div style="left:784px;top:180px;width:1450px;height:2px;background:#484e5b;"></div>
<svg style="left:806px;top:130px;" width="36" height="36" viewBox="0 0 36 36"><circle cx="18" cy="18" r="17.5" fill="#3a86a8"/><path d="M23.2 13.6 A6.8 6.8 0 1 0 23.2 22.4" fill="none" stroke="#24384a" stroke-width="3"/></svg>
<span style="letter-spacing:1.093px;left:853px;top:130.07125px;font:400 27.5px/38px 'Liberation Sans','Noto Sans CJK SC',sans-serif;color:#e2e2e2;-webkit-text-stroke:0.4px;">MainAbility.java</span>
<svg style="left:1080.5px;top:137px;" width="22" height="22" viewBox="0 0 22 22"><path d="M1 1 L21 21 M21 1 L1 21" stroke="#6e737b" stroke-width="2.6" fill="none"/></svg>
<svg style="left:1146px;top:130px;" width="36" height="36" viewBox="0 0 36 36"><circle cx="18" cy="18" r="17.5" fill="#3a86a8"/><path d="M23.2 13.6 A6.8 6.8 0 1 0 23.2 22.4" fill="none" stroke="#24384a" stroke-width="3"/></svg>
<span style="letter-spacing:0.921px;left:1193px;top:130.07125px;font:400 27.5px/38px 'Liberation Sans','Noto Sans CJK SC',sans-serif;color:#e2e2e2;-webkit-text-stroke:0.4px;">MainAbilitySlice.java</span>
<svg style="left:1485px;top:137px;" width="22" height="22" viewBox="0 0 22 22"><path d="M1 1 L21 21 M21 1 L1 21" stroke="#6e737b" stroke-width="2.6" fill="none"/></svg>
<div style="left:1528px;top:114px;width:348px;height:66px;background:#474b54;"></div>
<div style="left:1528px;top:174px;width:348px;height:7px;background:#0479ff;"></div>
<svg style="left:1549px;top:128px;" width="40" height="42" viewBox="0 0 40 42"><path d="M6 13.5 L17 2.5 V13.5 Z" fill="#8d99a3"/><path d="M19 2.5 H31.5 V19.5 H6 V15.5 H19 Z" fill="#8d99a3"/><rect x="1.2" y="22.6" width="38" height="17.4" fill="#c5622f"/><path d="M14 26.5 L7.5 31.3 L14 36.1 M20 26.5 L26.5 31.3 L20 36.1" fill="none" stroke="#3b2418" stroke-width="2.3"/></svg>
<span style="letter-spacing:1.055px;left:1596.5px;top:130.07125px;font:400 27.5px/38px 'Liberation Sans','Noto Sans CJK SC',sans-serif;color:#f2f2f2;-webkit-text-stroke:0.4px;">ability_main.xml</span>
<svg style="left:1830.5px;top:137px;" width="22" height="22" viewBox="0 0 22 22"><path d="M1 1 L21 21 M21 1 L1 21" stroke="#666d76" stroke-width="2.6" fill="none"/></svg>
<div style="left:784px;top:182px;width:1450px;height:1537px;overflow:hidden;background:#2b2b2b">
<div style="left:0px;top:0px;width:156px;height:1537px;background:#313335;"></div>
<div style="left:130px;top:0px;width:4px;height:1537px;background:#8fdf8f;"></div>
<div style="left:155px;top:0px;width:2px;height:1537px;background:#5a5a5a;"></div>
<div style="left:246px;top:0px;width:1.6px;height:1537px;background:#3b3b3b;"></div>
<div style="left:325.79999999999995px;top:0px;width:1.6px;height:1537px;background:#3b3b3b;"></div>
<div style="left:405.79999999999995px;top:0px;width:1.6px;height:342.5px;background:#3b3b3b;"></div>
<div style="left:405.79999999999995px;top:446.5px;width:1.6px;height:468.0px;background:#3b3b3b;"></div>
<div style="left:405.79999999999995px;top:1018.5px;width:1.6px;height:468.0px;background:#3b3b3b;"></div>
<span style="left:30.600000000000023px;top:-20.5px;font:400 29.3px/52px 'DejaVu Sans Mono','Liberation Mono',monospace;color:#606366;-webkit-text-stroke:0.7px">69</span>
<span style="left:491.80px;top:-22.5px;font:400 33.04px/52px 'DejaVu Sans Mono','Liberation Mono',monospace;letter-spacing:0.108px;-webkit-text-stroke:0.8px"><span style="color:#9876aa">ohos</span><span style="color:#bababa">:width</span><span style="color:#6a8759">=&quot;70vp&quot;</span></span>
<span style="left:30.600000000000023px;top:31.5px;font:400 29.3px/52px 'DejaVu Sans Mono','Liberation Mono',monospace;color:#606366;-webkit-text-stroke:0.7px">70</span>
<span style="left:491.80px;top:29.5px;font:400 33.04px/52px 'DejaVu Sans Mono','Liberation Mono',monospace;letter-spacing:0.108px;-webkit-text-stroke:0.8px"><span style="color:#9876aa">ohos</span><span style="color:#bababa">:background<span style="position:relative;top:-6.5px">_</span>element</span><span style="color:#6a8759">=&quot;black&quot;</span></span>
<span style="left:30.600000000000023px;top:83.5px;font:400 29.3px/52px 'DejaVu Sans Mono','Liberation Mono',monospace;color:#606366;-webkit-text-stroke:0.7px">71</span>
<span style="left:491.80px;top:81.5px;font:400 33.04px/52px 'DejaVu Sans Mono','Liberation Mono',monospace;letter-spacing:0.108px;-webkit-text-stroke:0.8px"><span style="color:#9876aa">ohos</span><span style="color:#bababa">:margin</span><span style="color:#6a8759">=&quot;8vp&quot;</span></span>
<span style="left:30.600000000000023px;top:135.5px;font:400 29.3px/52px 'DejaVu Sans Mono','Liberation Mono',monospace;color:#606366;-webkit-text-stroke:0.7px">72</span>
<div style="left:491.70000000000005px;top:134.5px;width:260.3px;height:52px;background:#52503a;"></div>
<span style="left:491.80px;top:133.5px;font:400 33.04px/52px 'DejaVu Sans Mono','Liberation Mono',monospace;letter-spacing:0.108px;-webkit-text-stroke:0.8px"><span style="color:#9876aa">ohos</span><span style="color:#bababa">:text</span><span style="color:#6a8759">=&quot;7&quot;</span></span>
<span style="left:30.600000000000023px;top:187.5px;font:400 29.3px/52px 'DejaVu Sans Mono','Liberation Mono',monospace;color:#606366;-webkit-text-stroke:0.7px">73</span>
<span style="left:491.80px;top:185.5px;font:400 33.04px/52px 'DejaVu Sans Mono','Liberation Mono',monospace;letter-spacing:0.108px;-webkit-text-stroke:0.8px"><span style="color:#9876aa">ohos</span><span style="color:#bababa">:text<span style="position:relative;top:-6.5px">_</span>alignment</span><span style="color:#6a8759">=&quot;center&quot;</span></span>
<span style="left:30.600000000000023px;top:239.5px;font:400 29.3px/52px 'DejaVu Sans Mono','Liberation Mono',monospace;color:#606366;-webkit-text-stroke:0.7px">74</span>
<span style="left:491.80px;top:237.5px;font:400 33.04px/52px 'DejaVu Sans Mono','Liberation Mono',monospace;letter-spacing:0.108px;-webkit-text-stroke:0.8px"><span style="color:#9876aa">ohos</span><span style="color:#bababa">:text<span style="position:relative;top:-6.5px">_</span>color</span><span style="color:#6a8759">=&quot;white&quot;</span></span>
<span style="left:30.600000000000023px;top:291.5px;font:400 29.3px/52px 'DejaVu Sans Mono','Liberation Mono',monospace;color:#606366;-webkit-text-stroke:0.7px">75</span>
<span style="left:491.80px;top:289.5px;font:400 33.04px/52px 'DejaVu Sans Mono','Liberation Mono',monospace;letter-spacing:0.108px;-webkit-text-stroke:0.8px"><span style="color:#9876aa">ohos</span><span style="color:#bababa">:text<span style="position:relative;top:-6.5px">_</span>size</span><span style="color:#6a8759">=&quot;30vp&quot;</span><span style="color:#e8bf6a">/&gt;</span></span>
<span style="left:30.600000000000023px;top:343.5px;font:400 29.3px/52px 'DejaVu Sans Mono','Liberation Mono',monospace;color:#606366;-webkit-text-stroke:0.7px">76</span>
<span style="left:30.600000000000023px;top:395.5px;font:400 29.3px/52px 'DejaVu Sans Mono','Liberation Mono',monospace;color:#606366;-webkit-text-stroke:0.7px">77</span>
<span style="left:411.80px;top:393.5px;font:400 33.04px/52px 'DejaVu Sans Mono','Liberation Mono',monospace;letter-spacing:0.108px;-webkit-text-stroke:0.8px"><span style="color:#e8bf6a">&lt;Text</span></span>
<span style="left:30.600000000000023px;top:447.5px;font:400 29.3px/52px 'DejaVu Sans Mono','Liberation Mono',monospace;color:#606366;-webkit-text-stroke:0.7px">78</span>
<span style="left:491.80px;top:445.5px;font:400 33.04px/52px 'DejaVu Sans Mono','Liberation Mono',monospace;letter-spacing:0.108px;-webkit-text-stroke:0.8px"><span style="color:#9876aa">ohos</span><span style="color:#bababa">:id</span><span style="color:#6a8759">=&quot;$+id:eight&quot;</span></span>
<span style="left:30.600000000000023px;top:499.5px;font:400 29.3px/52px 'DejaVu Sans Mono','Liberation Mono',monospace;color:#606366;-webkit-text-stroke:0.7px">79</span>
<span style="left:491.80px;top:497.5px;font:400 33.04px/52px 'DejaVu Sans Mono','Liberation Mono',monospace;letter-spacing:0.108px;-webkit-text-stroke:0.8px"><span style="color:#9876aa">ohos</span><span style="color:#bababa">:height</span><span style="color:#6a8759">=&quot;70vp&quot;</span></span>
<span style="left:30.600000000000023px;top:551.5px;font:400 29.3px/52px 'DejaVu Sans Mono','Liberation Mono',monospace;color:#606366;-webkit-text-stroke:0.7px">80</span>
<span style="left:491.80px;top:549.5px;font:400 33.04px/52px 'DejaVu Sans Mono','Liberation Mono',monospace;letter-spacing:0.108px;-webkit-text-stroke:0.8px"><span style="color:#9876aa">ohos</span><span style="color:#bababa">:width</span><span style="color:#6a8759">=&quot;70vp&quot;</span></span>
<span style="left:30.600000000000023px;top:603.5px;font:400 29.3px/52px 'DejaVu Sans Mono','Liberation Mono',monospace;color:#606366;-webkit-text-stroke:0.7px">81</span>
<span style="left:491.80px;top:601.5px;font:400 33.04px/52px 'DejaVu Sans Mono','Liberation Mono',monospace;letter-spacing:0.108px;-webkit-text-stroke:0.8px"><span style="color:#9876aa">ohos</span><span style="color:#bababa">:background<span style="position:relative;top:-6.5px">_</span>element</span><span style="color:#6a8759">=&quot;black&quot;</span></span>
<span style="left:30.600000000000023px;top:655.5px;font:400 29.3px/52px 'DejaVu Sans Mono','Liberation Mono',monospace;color:#606366;-webkit-text-stroke:0.7px">82</span>
<span style="left:491.80px;top:653.5px;font:400 33.04px/52px 'DejaVu Sans Mono','Liberation Mono',monospace;letter-spacing:0.108px;-webkit-text-stroke:0.8px"><span style="color:#9876aa">ohos</span><span style="color:#bababa">:margin</span><span style="color:#6a8759">=&quot;8vp&quot;</span></span>
<span style="left:30.600000000000023px;top:707.5px;font:400 29.3px/52px 'DejaVu Sans Mono','Liberation Mono',monospace;color:#606366;-webkit-text-stroke:0.7px">83</span>
<div style="left:491.70000000000005px;top:706.5px;width:260.3px;height:52px;background:#52503a;"></div>
<span style="left:491.80px;top:705.5px;font:400 33.04px/52px 'DejaVu Sans Mono','Liberation Mono',monospace;letter-spacing:0.108px;-webkit-text-stroke:0.8px"><span style="color:#9876aa">ohos</span><span style="color:#bababa">:text</span><span style="color:#6a8759">=&quot;8&quot;</span></span>
<span style="left:30.600000000000023px;top:759.5px;font:400 29.3px/52px 'DejaVu Sans Mono','Liberation Mono',monospace;color:#606366;-webkit-text-stroke:0.7px">84</span>
<span style="left:491.80px;top:757.5px;font:400 33.04px/52px 'DejaVu Sans Mono','Liberation Mono',monospace;letter-spacing:0.108px;-webkit-text-stroke:0.8px"><span style="color:#9876aa">ohos</span><span style="color:#bababa">:text<span style="position:relative;top:-6.5px">_</span>alignment</span><span style="color:#6a8759">=&quot;center&quot;</span></span>
<span style="left:30.600000000000023px;top:811.5px;font:400 29.3px/52px 'DejaVu Sans Mono','Liberation Mono',monospace;color:#606366;-webkit-text-stroke:0.7px">85</span>
<span style="left:491.80px;top:809.5px;font:400 33.04px/52px 'DejaVu Sans Mono','Liberation Mono',monospace;letter-spacing:0.108px;-webkit-text-stroke:0.8px"><span style="color:#9876aa">ohos</span><span style="color:#bababa">:text<span style="position:relative;top:-6.5px">_</span>color</span><span style="color:#6a8759">=&quot;white&quot;</span></span>
<span style="left:30.600000000000023px;top:863.5px;font:400 29.3px/52px 'DejaVu Sans Mono','Liberation Mono',monospace;color:#606366;-webkit-text-stroke:0.7px">86</span>
<span style="left:491.80px;top:861.5px;font:400 33.04px/52px 'DejaVu Sans Mono','Liberation Mono',monospace;letter-spacing:0.108px;-webkit-text-stroke:0.8px"><span style="color:#9876aa">ohos</span><span style="color:#bababa">:text<span style="position:relative;top:-6.5px">_</span>size</span><span style="color:#6a8759">=&quot;30vp&quot;</span><span style="color:#e8bf6a">/&gt;</span></span>
<span style="left:30.600000000000023px;top:915.5px;font:400 29.3px/52px 'DejaVu Sans Mono','Liberation Mono',monospace;color:#606366;-webkit-text-stroke:0.7px">87</span>
<span style="left:30.600000000000023px;top:967.5px;font:400 29.3px/52px 'DejaVu Sans Mono','Liberation Mono',monospace;color:#606366;-webkit-text-stroke:0.7px">88</span>
<span style="left:411.80px;top:965.5px;font:400 33.04px/52px 'DejaVu Sans Mono','Liberation Mono',monospace;letter-spacing:0.108px;-webkit-text-stroke:0.8px"><span style="color:#e8bf6a">&lt;Text</span></span>
<span style="left:30.600000000000023px;top:1019.5px;font:400 29.3px/52px 'DejaVu Sans Mono','Liberation Mono',monospace;color:#606366;-webkit-text-stroke:0.7px">89</span>
<span style="left:491.80px;top:1017.5px;font:400 33.04px/52px 'DejaVu Sans Mono','Liberation Mono',monospace;letter-spacing:0.108px;-webkit-text-stroke:0.8px"><span style="color:#9876aa">ohos</span><span style="color:#bababa">:id</span><span style="color:#6a8759">=&quot;$+id:nine&quot;</span></span>
<span style="left:30.600000000000023px;top:1071.5px;font:400 29.3px/52px 'DejaVu Sans Mono','Liberation Mono',monospace;color:#606366;-webkit-text-stroke:0.7px">90</span>
<span style="left:491.80px;top:1069.5px;font:400 33.04px/52px 'DejaVu Sans Mono','Liberation Mono',monospace;letter-spacing:0.108px;-webkit-text-stroke:0.8px"><span style="color:#9876aa">ohos</span><span style="color:#bababa">:height</span><span style="color:#6a8759">=&quot;70vp&quot;</span></span>
<span style="left:30.600000000000023px;top:1123.5px;font:400 29.3px/52px 'DejaVu Sans Mono','Liberation Mono',monospace;color:#606366;-webkit-text-stroke:0.7px">91</span>
<span style="left:491.80px;top:1121.5px;font:400 33.04px/52px 'DejaVu Sans Mono','Liberation Mono',monospace;letter-spacing:0.108px;-webkit-text-stroke:0.8px"><span style="color:#9876aa">ohos</span><span style="color:#bababa">:width</span><span style="color:#6a8759">=&quot;70vp&quot;</span></span>
<span style="left:30.600000000000023px;top:1175.5px;font:400 29.3px/52px 'DejaVu Sans Mono','Liberation Mono',monospace;color:#606366;-webkit-text-stroke:0.7px">92</span>
<span style="left:491.80px;top:1173.5px;font:400 33.04px/52px 'DejaVu Sans Mono','Liberation Mono',monospace;letter-spacing:0.108px;-webkit-text-stroke:0.8px"><span style="color:#9876aa">ohos</span><span style="color:#bababa">:background<span style="position:relative;top:-6.5px">_</span>element</span><span style="color:#6a8759">=&quot;black&quot;</span></span>
<span style="left:30.600000000000023px;top:1227.5px;font:400 29.3px/52px 'DejaVu Sans Mono','Liberation Mono',monospace;color:#606366;-webkit-text-stroke:0.7px">93</span>
<span style="left:491.80px;top:1225.5px;font:400 33.04px/52px 'DejaVu Sans Mono','Liberation Mono',monospace;letter-spacing:0.108px;-webkit-text-stroke:0.8px"><span style="color:#9876aa">ohos</span><span style="color:#bababa">:margin</span><span style="color:#6a8759">=&quot;8vp&quot;</span></span>
<span style="left:30.600000000000023px;top:1279.5px;font:400 29.3px/52px 'DejaVu Sans Mono','Liberation Mono',monospace;color:#606366;-webkit-text-stroke:0.7px">94</span>
<div style="left:491.70000000000005px;top:1278.5px;width:260.3px;height:52px;background:#52503a;"></div>
<span style="left:491.80px;top:1277.5px;font:400 33.04px/52px 'DejaVu Sans Mono','Liberation Mono',monospace;letter-spacing:0.108px;-webkit-text-stroke:0.8px"><span style="color:#9876aa">ohos</span><span style="color:#bababa">:text</span><span style="color:#6a8759">=&quot;9&quot;</span></span>
<span style="left:30.600000000000023px;top:1331.5px;font:400 29.3px/52px 'DejaVu Sans Mono','Liberation Mono',monospace;color:#606366;-webkit-text-stroke:0.7px">95</span>
<span style="left:491.80px;top:1329.5px;font:400 33.04px/52px 'DejaVu Sans Mono','Liberation Mono',monospace;letter-spacing:0.108px;-webkit-text-stroke:0.8px"><span style="color:#9876aa">ohos</span><span style="color:#bababa">:text<span style="position:relative;top:-6.5px">_</span>alignment</span><span style="color:#6a8759">=&quot;center&quot;</span></span>
<span style="left:30.600000000000023px;top:1383.5px;font:400 29.3px/52px 'DejaVu Sans Mono','Liberation Mono',monospace;color:#606366;-webkit-text-stroke:0.7px">96</span>
<span style="left:491.80px;top:1381.5px;font:400 33.04px/52px 'DejaVu Sans Mono','Liberation Mono',monospace;letter-spacing:0.108px;-webkit-text-stroke:0.8px"><span style="color:#9876aa">ohos</span><span style="color:#bababa">:text<span style="position:relative;top:-6.5px">_</span>color</span><span style="color:#6a8759">=&quot;white&quot;</span></span>
<span style="left:30.600000000000023px;top:1435.5px;font:400 29.3px/52px 'DejaVu Sans Mono','Liberation Mono',monospace;color:#606366;-webkit-text-stroke:0.7px">97</span>
<span style="left:491.80px;top:1433.5px;font:400 33.04px/52px 'DejaVu Sans Mono','Liberation Mono',monospace;letter-spacing:0.108px;-webkit-text-stroke:0.8px"><span style="color:#9876aa">ohos</span><span style="color:#bababa">:text<span style="position:relative;top:-6.5px">_</span>size</span><span style="color:#6a8759">=&quot;30vp&quot;</span><span style="color:#e8bf6a">/&gt;</span></span>
<span style="left:30.600000000000023px;top:1487.5px;font:400 29.3px/52px 'DejaVu Sans Mono','Liberation Mono',monospace;color:#606366;-webkit-text-stroke:0.7px">98</span>
<div style="left:82px;top:40.0px;width:30px;height:30px;background:#000;"></div>
<div style="left:82px;top:248.0px;width:30px;height:30px;background:#fff;"></div>
<div style="left:82px;top:612.0px;width:30px;height:30px;background:#000;"></div>
<div style="left:82px;top:820.0px;width:30px;height:30px;background:#fff;"></div>
<div style="left:82px;top:1184.0px;width:30px;height:30px;background:#000;"></div>
<div style="left:82px;top:1392.0px;width:30px;height:30px;background:#fff;"></div>
<svg style="left:144.70000000000005px;top:301.7px;" width="22.6" height="27.5" viewBox="0 0 22.6 27.5"><path d="M1.5 27.5 V10.5 L12 1.2 L22.5 10.5 V27.5 Z" fill="#2b2b2b" stroke="#5a5a5a" stroke-width="2"/><path d="M6 17 H18" stroke="#5a5a5a" stroke-width="2"/></svg>
<svg style="left:144.70000000000005px;top:873.7px;" width="22.6" height="27.5" viewBox="0 0 22.6 27.5"><path d="M1.5 27.5 V10.5 L12 1.2 L22.5 10.5 V27.5 Z" fill="#2b2b2b" stroke="#5a5a5a" stroke-width="2"/><path d="M6 17 H18" stroke="#5a5a5a" stroke-width="2"/></svg>
<svg style="left:144.70000000000005px;top:1445.7px;" width="22.6" height="27.5" viewBox="0 0 22.6 27.5"><path d="M1.5 27.5 V10.5 L12 1.2 L22.5 10.5 V27.5 Z" fill="#2b2b2b" stroke="#5a5a5a" stroke-width="2"/><path d="M6 17 H18" stroke="#5a5a5a" stroke-width="2"/></svg>
<svg style="left:144.70000000000005px;top:411.1px;" width="22.6" height="27.5" viewBox="0 0 22.6 27.5"><path d="M1.5 1.5 V18.5 L12 27.8 L22.5 18.5 V1.5 Z" fill="#2b2b2b" stroke="#5a5a5a" stroke-width="2"/><path d="M6 12 H18" stroke="#5a5a5a" stroke-width="2"/></svg>
<svg style="left:144.70000000000005px;top:983.1px;" width="22.6" height="27.5" viewBox="0 0 22.6 27.5"><path d="M1.5 1.5 V18.5 L12 27.8 L22.5 18.5 V1.5 Z" fill="#2b2b2b" stroke="#5a5a5a" stroke-width="2"/><path d="M6 12 H18" stroke="#5a5a5a" stroke-width="2"/></svg>
<svg style="left:1261px;top:19.19999999999999px;" width="30" height="27.6" viewBox="0 0 30 27.6"><path d="M15 0 L30 27.6 H0 Z" fill="#c9a01d"/><rect x="12.7" y="9.6" width="4.8" height="9.6" fill="#2b2b2b"/><rect x="12.7" y="21" width="4.8" height="4" fill="#2b2b2b"/></svg>
<span style="letter-spacing:-1.273px;left:1297.5px;top:17.444500000000012px;font:400 27px/37px 'Liberation Sans','Noto Sans CJK SC',sans-serif;color:#c4c4c4;-webkit-text-stroke:0.6px;">19</span>
<svg style="left:1352px;top:25px;" width="24" height="16" viewBox="0 0 24 16"><path d="M2 14 L12 3 L22 14" fill="none" stroke="#b4b4b4" stroke-width="3"/></svg>
<svg style="left:1406px;top:27px;" width="24" height="16" viewBox="0 0 24 16"><path d="M2 2 L12 13 L22 2" fill="none" stroke="#b4b4b4" stroke-width="3"/></svg>
<div style="left:1414px;top:198px;width:36px;height:6.5px;background:#c29a1f;"></div>
<div style="left:1414px;top:246px;width:36px;height:6.5px;background:#c29a1f;"></div>
<div style="left:1414px;top:357px;width:36px;height:6.5px;background:#c29a1f;"></div>
<div style="left:1414px;top:448px;width:36px;height:6.5px;background:#c29a1f;"></div>
<div style="left:1414px;top:507px;width:36px;height:6.5px;background:#c29a1f;"></div>
<div style="left:1414px;top:566px;width:36px;height:6.5px;background:#c29a1f;"></div>
<div style="left:1414px;top:626px;width:36px;height:6.5px;background:#c29a1f;"></div>
<div style="left:1414px;top:727px;width:36px;height:6.5px;background:#c29a1f;"></div>
<div style="left:1414px;top:785px;width:36px;height:6.5px;background:#c29a1f;"></div>
<div style="left:1414px;top:843px;width:36px;height:6.5px;background:#c29a1f;"></div>
<div style="left:1414px;top:903px;width:36px;height:6.5px;background:#c29a1f;"></div>
<div style="left:1414px;top:1000px;width:36px;height:6.5px;background:#c29a1f;"></div>
<div style="left:1414px;top:1057px;width:36px;height:6.5px;background:#c29a1f;"></div>
<div style="left:1414px;top:1117px;width:36px;height:6.5px;background:#c29a1f;"></div>
<div style="left:1414px;top:1176px;width:36px;height:6.5px;background:#c29a1f;"></div>
<div style="left:1414px;top:1272px;width:36px;height:6.5px;background:#c29a1f;"></div>
<div style="left:1414px;top:1332px;width:36px;height:6.5px;background:#c29a1f;"></div>
<div style="left:1414px;top:1390px;width:36px;height:6.5px;background:#c29a1f;"></div>
<div style="left:1414px;top:1450px;width:36px;height:6.5px;background:#c29a1f;"></div>
<div style="left:1424px;top:441px;width:18px;height:149px;border-radius:9px;background:rgba(140,140,140,0.42)"></div>
</div>
<div style="left:784px;top:1719px;width:1450px;height:2px;background:#3a3a3a;"></div>
<div style="left:784px;top:1721px;width:1450px;height:51px;background:#313335;"></div>
<span style="letter-spacing:1.827px;left:960px;top:1725.4901px;font:400 28.6px/40px 'Liberation Sans','Noto Sans CJK SC',sans-serif;color:#59a860;-webkit-text-stroke:0.4px;">DirectionalLayout</span>
<svg style="left:1233px;top:1737.5px;" width="9" height="17" viewBox="0 0 9 17"><path d="M1.5 1.5 L7 8.5 L1.5 15.5" fill="none" stroke="#5c5f63" stroke-width="2"/></svg>
<span style="letter-spacing:1.827px;left:1258.5px;top:1725.4901px;font:400 28.6px/40px 'Liberation Sans','Noto Sans CJK SC',sans-serif;color:#b3ae60;-webkit-text-stroke:0.4px;">DirectionalLayout</span>
<svg style="left:1531px;top:1737.5px;" width="9" height="17" viewBox="0 0 9 17"><path d="M1.5 1.5 L7 8.5 L1.5 15.5" fill="none" stroke="#5c5f63" stroke-width="2"/></svg>
<span style="letter-spacing:2.064px;left:1557px;top:1725.4901px;font:400 28.6px/40px 'Liberation Sans','Noto Sans CJK SC',sans-serif;color:#c75450;-webkit-text-stroke:0.4px;">TextField</span>
<div style="left:2234px;top:114px;width:2px;height:1658px;background:#484e5b;"></div>
<div style="left:2236px;top:180px;width:1072px;height:2px;background:#484e5b;"></div>
<span style="letter-spacing:0.833px;left:2251px;top:124.43875px;font:400 32.5px/45px 'Liberation Sans','Noto Sans CJK SC',sans-serif;color:#e6e6e6;-webkit-text-stroke:0.4px;">Previewer</span>
<svg style="left:2961px;top:130px;" width="42" height="38" viewBox="0 0 42 38"><path d="M0 2.2 H25 M12.5 2 V37 M19 17.2 H40 M29.5 17 V37" fill="none" stroke="#afb1b3" stroke-width="4.2"/></svg>
<svg style="left:3033px;top:131px;" width="36" height="34" viewBox="0 0 36 34"><path d="M30 12 A13 13 0 0 0 6 10" fill="none" stroke="#afb1b3" stroke-width="4"/><path d="M6 22 A13 13 0 0 0 30 24" fill="none" stroke="#afb1b3" stroke-width="4"/><path d="M1 2 V14 H13 Z" fill="#afb1b3"/><path d="M35 32 V20 H23 Z" fill="#afb1b3"/></svg>
<svg style="left:3100px;top:129px;" width="38" height="38" viewBox="0 0 38 38"><path d="M11 0 V8 M26 0 V8" stroke="#afb1b3" stroke-width="4"/><rect x="1" y="6" width="35" height="4" fill="#afb1b3"/><path d="M5 10 H32 V14 Q32 25 18.5 25 Q5 25 5 14 Z" fill="#afb1b3"/><path d="M18.5 24 V32 Q18.5 36 23 36 Q27 36 27 32 Q27 29 31 29 H36" fill="none" stroke="#afb1b3" stroke-width="2.4"/></svg>
<div style="left:3160px;top:124px;width:2px;height:46px;background:#55534f;"></div>
<svg style="left:3189.8px;top:132.1px;" width="32" height="32" viewBox="0 0 32 32"><path d="M12.34 0.73 L19.66 0.73 L20.44 5.50 L22.87 6.91 L27.40 5.20 L31.05 11.53 L27.31 14.59 L27.31 17.41 L31.05 20.47 L27.40 26.80 L22.87 25.09 L20.44 26.50 L19.66 31.27 L12.34 31.27 L11.56 26.50 L9.13 25.09 L4.60 26.80 L0.95 20.47 L4.69 17.41 L4.69 14.59 L0.95 11.53 L4.60 5.20 L9.13 6.91 L11.56 5.50 Z" fill="#afb1b3" stroke="#afb1b3" stroke-width="1.6" stroke-linejoin="round"/><circle cx="16" cy="16" r="5.3" fill="#333741"/></svg>
<div style="left:3259px;top:145.2px;width:30px;height:5.5px;background:#afb1b3;"></div>
<div style="left:2236px;top:182px;width:1072px;height:64px;background:#3d404a;"></div>
<span style="letter-spacing:0.022px;left:2268.5px;top:193.9515px;font:400 29px/40px 'Liberation Sans','Noto Sans CJK SC',sans-serif;color:#f4f4f4;-webkit-text-stroke:0.3px;">entry : base/ability_main.xml</span>
<svg style="left:3186px;top:201px;" width="32" height="32" viewBox="0 0 32 32"><circle cx="13" cy="13" r="11.5" fill="none" stroke="#8a8d93" stroke-width="2"/><path d="M21.5 21.5 L29 29" stroke="#8a8d93" stroke-width="2.2"/><path d="M7.5 13 H18.5" stroke="#8a8d93" stroke-width="2"/></svg>
<svg style="left:3246px;top:201px;" width="32" height="32" viewBox="0 0 32 32"><circle cx="13" cy="13" r="11.5" fill="none" stroke="#8a8d93" stroke-width="2"/><path d="M21.5 21.5 L29 29" stroke="#8a8d93" stroke-width="2.2"/><path d="M7.5 13 H18.5 M13 7.5 V18.5" stroke="#8a8d93" stroke-width="2"/></svg>
<span style="letter-spacing:-0.072px;left:2654.5px;top:288.28615px;font:400 28.9px/40px 'Liberation Sans','Noto Sans CJK SC',sans-serif;color:#ffffff;-webkit-text-stroke:0.3px;">1080 x 2340 (P40)</span>
<div style="left:3041px;top:568px;width:9px;height:138px;background:#0b0b0b;border-radius:0 5px 5px 0"></div>
<div style="left:3041px;top:743px;width:9px;height:69px;background:#0b0b0b;border-radius:0 5px 5px 0"></div>
<div style="left:2502px;top:347px;width:541px;height:1117px;border-radius:40px;background:#050505"></div>
<div style="left:2503.5px;top:348.5px;width:538px;height:1114px;border-radius:38.5px;background:#2a2a2a;box-shadow:inset 0 0 7px 3px #6a6a6a"></div>
<div style="left:2524.5px;top:370px;width:495.0px;height:1073px;border-radius:24px;background:#e2e2e2;box-shadow:0 0 2px 1px #1c1c1c"></div>
<span style="letter-spacing:-2.078px;left:2740.5px;top:610.0915px;font:400 69px/80px 'Liberation Sans','Noto Sans CJK SC',sans-serif;color:#000;-webkit-text-stroke:1.2px;">123+123</span>
<span style="letter-spacing:-1.250px;left:2911.5px;top:695.68595px;font:400 51.7px/60px 'Liberation Sans','Noto Sans CJK SC',sans-serif;color:#555;-webkit-text-stroke:0.9px;">246</span>
<div style="left:2535.5px;top:835.5px;width:473px;height:597.5px;border-radius:14px;background:#eeeeee"></div>
<div style="left:2549.5px;top:849px;width:445.5px;height:96.5px;background:#000;"></div>
<span style="left:2724.3px;top:873.3px;width:96px;text-align:center;font:400 39px/50px 'Liberation Sans','Noto Sans CJK SC',sans-serif;color:#fff;-webkit-text-stroke:0.9px">C</span>
<div style="left:2546.5px;top:959.2px;width:96.5px;height:96.3px;background:#000;"></div>
<span style="left:2546.75px;top:983.4000000000001px;width:96px;text-align:center;font:400 40px/50px 'Liberation Sans','Noto Sans CJK SC',sans-serif;color:#fff;-webkit-text-stroke:0.9px">7</span>
<div style="left:2664.8px;top:959.2px;width:96.5px;height:96.3px;background:#000;"></div>
<span style="left:2665.0px;top:983.4000000000001px;width:96px;text-align:center;font:400 40px/50px 'Liberation Sans','Noto Sans CJK SC',sans-serif;color:#fff;-webkit-text-stroke:0.9px">8</span>
<div style="left:2783.0px;top:959.2px;width:96.5px;height:96.3px;background:#000;"></div>
<span style="left:2783.25px;top:983.4000000000001px;width:96px;text-align:center;font:400 40px/50px 'Liberation Sans','Noto Sans CJK SC',sans-serif;color:#fff;-webkit-text-stroke:0.9px">9</span>
<div style="left:2901.2px;top:959.2px;width:96.5px;height:96.3px;background:#fff;"></div>
<span style="left:2901.5px;top:983.4000000000001px;width:96px;text-align:center;font:400 38px/50px 'Liberation Sans','Noto Sans CJK SC',sans-serif;color:#000;-webkit-text-stroke:0.9px">+</span>
<div style="left:2546.5px;top:1077.5px;width:96.5px;height:96.3px;background:#000;"></div>
<span style="left:2546.75px;top:1101.65px;width:96px;text-align:center;font:400 40px/50px 'Liberation Sans','Noto Sans CJK SC',sans-serif;color:#fff;-webkit-text-stroke:0.9px">4</span>
<div style="left:2664.8px;top:1077.5px;width:96.5px;height:96.3px;background:#000;"></div>
<span style="left:2665.0px;top:1101.65px;width:96px;text-align:center;font:400 40px/50px 'Liberation Sans','Noto Sans CJK SC',sans-serif;color:#fff;-webkit-text-stroke:0.9px">5</span>
<div style="left:2783.0px;top:1077.5px;width:96.5px;height:96.3px;background:#000;"></div>
<span style="left:2783.25px;top:1101.65px;width:96px;text-align:center;font:400 40px/50px 'Liberation Sans','Noto Sans CJK SC',sans-serif;color:#fff;-webkit-text-stroke:0.9px">6</span>
<div style="left:2901.2px;top:1077.5px;width:96.5px;height:96.3px;background:#fff;"></div>
<span style="left:2901.5px;top:1101.65px;width:96px;text-align:center;font:400 38px/50px 'Liberation Sans','Noto Sans CJK SC',sans-serif;color:#000;-webkit-text-stroke:0.9px">−</span>
<div style="left:2546.5px;top:1195.7px;width:96.5px;height:96.3px;background:#000;"></div>
<span style="left:2546.75px;top:1219.9px;width:96px;text-align:center;font:400 40px/50px 'Liberation Sans','Noto Sans CJK SC',sans-serif;color:#fff;-webkit-text-stroke:0.9px">1</span>
<div style="left:2664.8px;top:1195.7px;width:96.5px;height:96.3px;background:#000;"></div>
<span style="left:2665.0px;top:1219.9px;width:96px;text-align:center;font:400 40px/50px 'Liberation Sans','Noto Sans CJK SC',sans-serif;color:#fff;-webkit-text-stroke:0.9px">2</span>
<div style="left:2783.0px;top:1195.7px;width:96.5px;height:96.3px;background:#000;"></div>
<span style="left:2783.25px;top:1219.9px;width:96px;text-align:center;font:400 40px/50px 'Liberation Sans','Noto Sans CJK SC',sans-serif;color:#fff;-webkit-text-stroke:0.9px">3</span>
<div style="left:2901.2px;top:1195.7px;width:96.5px;height:96.3px;background:#fff;"></div>
<span style="left:2901.5px;top:1219.9px;width:96px;text-align:center;font:400 38px/50px 'Liberation Sans','Noto Sans CJK SC',sans-serif;color:#000;-webkit-text-stroke:0.9px">÷</span>
<div style="left:2546.5px;top:1314.0px;width:96.5px;height:96.3px;background:#000;"></div>
<span style="left:2546.75px;top:1338.15px;width:96px;text-align:center;font:400 40px/50px 'Liberation Sans','Noto Sans CJK SC',sans-serif;color:#fff;-webkit-text-stroke:0.9px">0</span>
<div style="left:2664.8px;top:1314.0px;width:96.5px;height:96.3px;background:#000;"></div>
<span style="left:2665.0px;top:1338.15px;width:96px;text-align:center;font:400 40px/50px 'Liberation Sans','Noto Sans CJK SC',sans-serif;color:#fff;-webkit-text-stroke:0.9px">.</span>
<div style="left:2783.0px;top:1314.0px;width:96.5px;height:96.3px;background:#888888;"></div>
<span style="left:2783.25px;top:1338.15px;width:96px;text-align:center;font:400 40px/50px 'Liberation Sans','Noto Sans CJK SC',sans-serif;color:#fff;-webkit-text-stroke:0.9px">=</span>
<div style="left:2901.2px;top:1314.0px;width:96.5px;height:96.3px;background:#fff;"></div>
<span style="left:2901.5px;top:1338.15px;width:96px;text-align:center;font:400 38px/50px 'Liberation Sans','Noto Sans CJK SC',sans-serif;color:#000;-webkit-text-stroke:0.9px">×</span>
<div style="left:2650px;top:1506px;width:244.5px;height:64px;background:#3e414b;box-shadow:0 2px 10px rgba(0,0,0,0.25)"></div>
<div style="left:2730.5px;top:1506px;width:2px;height:64px;background:#32353d;"></div>
<div style="left:2812.5px;top:1506px;width:2px;height:64px;background:#32353d;"></div>
<svg style="left:2670px;top:1520px;" width="42" height="38" viewBox="0 0 42 38"><rect x="1.5" y="1.5" width="17" height="31" rx="3" fill="none" stroke="#8e9197" stroke-width="2.2"/><path d="M8 27.5 H12" stroke="#8e9197" stroke-width="2"/><path d="M23 15 H34 Q38 15 38 19 V32.5 H23" fill="none" stroke="#8e9197" stroke-width="2.2"/></svg>
<svg style="left:2751.5px;top:1518.5px;" width="40" height="40" viewBox="0 0 40 40"><circle cx="20" cy="20" r="10.5" fill="none" stroke="#8e9197" stroke-width="2.2"/><path d="M34.5 20.0 L39.0 20.0" stroke="#8e9197" stroke-width="2"/><path d="M30.3 30.3 L33.4 33.4" stroke="#8e9197" stroke-width="2"/><path d="M20.0 34.5 L20.0 39.0" stroke="#8e9197" stroke-width="2"/><path d="M9.7 30.3 L6.6 33.4" stroke="#8e9197" stroke-width="2"/><path d="M5.5 20.0 L1.0 20.0" stroke="#8e9197" stroke-width="2"/><path d="M9.7 9.7 L6.6 6.6" stroke="#8e9197" stroke-width="2"/><path d="M20.0 5.5 L20.0 1.0" stroke="#8e9197" stroke-width="2"/><path d="M30.3 9.7 L33.4 6.6" stroke="#8e9197" stroke-width="2"/></svg>
<svg style="left:2834px;top:1534px;" width="40" height="10" viewBox="0 0 40 10"><circle cx="4" cy="5" r="3.6" fill="#8e9197"/><circle cx="19.5" cy="5" r="3.6" fill="#8e9197"/><circle cx="35" cy="5" r="3.6" fill="#8e9197"/></svg>
<div style="left:3308px;top:114px;width:50px;height:1658px;background:#333741;"></div>
<div style="left:3308px;top:288px;width:50px;height:262px;background:#474b54;"></div>
<div style="left:3307px;top:114px;width:1.5px;height:1658px;background:#2c2e35;"></div>
<svg style="left:3317.3px;top:138.6px;" width="32.6" height="25.8" viewBox="0 -1 38.5 30.5"><path d="M0.5 29 C0 16 5 6.5 14 5.5 C20 5 24 9 27 11.5 C31 12.2 34 9 33.5 5.8 C33 2.8 29.8 2.6 28.6 4.6 L27.2 3.4 C28.5 -0.3 35 -0.8 37 3.8 C39 10 35 15 30.5 18.5 C28 21 27.5 24 27.3 29 L22.8 29 A3.3 3.3 0 0 0 16.2 29 L11.7 29 A3.3 3.3 0 0 0 5.1 29 Z" fill="#afb1b3"/><circle cx="25.4" cy="12.4" r="0.95" fill="#333741"/><path d="M7 8.8 L11.3 15 L17.6 10.6" fill="none" stroke="#333741" stroke-width="0.9"/></svg>
<span style="letter-spacing:0.659px;left:3314px;top:177px;font:400 28px/36px 'Liberation Sans','Noto Sans CJK SC',sans-serif;color:#e0e0e0;transform-origin:0 0;transform:translate(36px,0) rotate(90deg);-webkit-text-stroke:0.35px;">Gradle</span>
<svg style="left:3318px;top:320px;" width="34" height="22" viewBox="0 0 34 22"><path d="M1 11 Q17 -7 33 11 Q17 29 1 11 Z" fill="#afb1b3"/><circle cx="17" cy="11" r="6.8" fill="#474b54"/><circle cx="17" cy="11" r="3.4" fill="#afb1b3"/></svg>
<span style="letter-spacing:0.704px;left:3314px;top:356px;font:400 28px/36px 'Liberation Sans','Noto Sans CJK SC',sans-serif;color:#f0f0f0;transform-origin:0 0;transform:translate(36px,0) rotate(90deg);-webkit-text-stroke:0.35px;"><u>3</u>: Previewer</span>
<div style="left:0px;top:1770px;width:3358px;height:2px;background:#292b30;"></div>
<div style="left:0px;top:1772px;width:3358px;height:50px;background:#333741;"></div>
<div style="left:0px;top:1822px;width:3358px;height:2px;background:#47474a;"></div>
<div style="left:0px;top:1824px;width:3358px;height:48px;background:#333741;"></div>
<svg style="left:76.5px;top:1783px;" width="28" height="30" viewBox="0 0 28 30"><path d="M2.2 1.5 V28.5" stroke="#afb1b3" stroke-width="4.4"/><path d="M3 19.5 H16.5 V10" fill="none" stroke="#afb1b3" stroke-width="4.8"/><path d="M7.5 12 L16.5 0.5 L25.5 12 Z" fill="#afb1b3"/></svg>
<span style="letter-spacing:0.445px;left:112px;top:1782.67125px;font:400 27.5px/38px 'Liberation Sans','Noto Sans CJK SC',sans-serif;color:#e0e0e0;-webkit-text-stroke:0.5px;"><u>9</u>: Git</span>
<svg style="left:236px;top:1785px;" width="22" height="26" viewBox="0 0 22 26"><path d="M1 1 L21 13 L1 25 Z" fill="#afb1b3"/></svg>
<span style="letter-spacing:0.228px;left:272.5px;top:1782.67125px;font:400 27.5px/38px 'Liberation Sans','Noto Sans CJK SC',sans-serif;color:#e0e0e0;-webkit-text-stroke:0.5px;"><u>4</u>: Run</span>
<svg style="left:408px;top:1783px;" width="28" height="28" viewBox="0 0 28 28"><circle cx="14" cy="14" r="13" fill="#afb1b3"/><path d="M14 6 V16" stroke="#333741" stroke-width="3.6"/><circle cx="14" cy="21" r="2" fill="#333741"/></svg>
<span style="letter-spacing:0.368px;left:445.5px;top:1782.67125px;font:400 27.5px/38px 'Liberation Sans','Noto Sans CJK SC',sans-serif;color:#e0e0e0;-webkit-text-stroke:0.5px;"><u>6</u>: 问题</span>
<svg style="left:587px;top:1787px;" width="27" height="22" viewBox="0 0 27 22"><path d="M0 2 H4 M8 2 H26 M0 11 H4 M8 11 H26 M0 20 H4 M8 20 H26" stroke="#afb1b3" stroke-width="3.6"/></svg>
<span style="letter-spacing:0.137px;left:625px;top:1782.67125px;font:400 27.5px/38px 'Liberation Sans','Noto Sans CJK SC',sans-serif;color:#e0e0e0;-webkit-text-stroke:0.5px;">TODO</span>
<svg style="left:754px;top:1784px;" width="28" height="25" viewBox="0 0 28 25"><rect x="0" y="0" width="28" height="25" fill="#afb1b3"/><path d="M5 6 L11 12 L5 18 M13 19 H22" fill="none" stroke="#333741" stroke-width="2.6"/></svg>
<span style="letter-spacing:0.500px;left:792px;top:1782.67125px;font:400 27.5px/38px 'Liberation Sans','Noto Sans CJK SC',sans-serif;color:#e0e0e0;-webkit-text-stroke:0.5px;">终端</span>
<svg style="left:903px;top:1781px;" width="30" height="32" viewBox="0 0 30 32"><rect x="2" y="5" width="25" height="25" rx="2" fill="none" stroke="#afb1b3" stroke-width="2.4"/><rect x="9" y="1" width="11" height="7" fill="#333741" stroke="#afb1b3" stroke-width="2.2"/><path d="M8 14 H21 M8 19 H21 M8 24 H17" stroke="#afb1b3" stroke-width="2.2"/></svg>
<span style="letter-spacing:0.987px;left:942.5px;top:1782.67125px;font:400 27.5px/38px 'Liberation Sans','Noto Sans CJK SC',sans-serif;color:#e0e0e0;-webkit-text-stroke:0.5px;">PreviewerLog</span>
<svg style="left:1175px;top:1785px;" width="34" height="25" viewBox="0 0 34 25"><path d="M4.5 24 A13 13 0 0 1 22 5" fill="none" stroke="#afb1b3" stroke-width="6"/><path d="M27.5 10 A13 13 0 0 1 29.5 24" fill="none" stroke="#afb1b3" stroke-width="6"/><path d="M15 24 L24.5 6" stroke="#afb1b3" stroke-width="4.4"/></svg>
<span style="letter-spacing:1.049px;left:1216.5px;top:1782.67125px;font:400 27.5px/38px 'Liberation Sans','Noto Sans CJK SC',sans-serif;color:#e0e0e0;-webkit-text-stroke:0.5px;">Profiler</span>
<svg style="left:1361px;top:1780px;" width="34" height="32" viewBox="0 0 34 32"><rect x="1" y="4" width="29" height="25" rx="2" fill="#afb1b3"/><path d="M8 0 V7 M23 0 V7" stroke="#afb1b3" stroke-width="3"/><rect x="3" y="9" width="25" height="3" fill="#333741"/><circle cx="23" cy="22" r="9" fill="#afb1b3" stroke="#333741" stroke-width="2"/><path d="M23 17 V22 H27" fill="none" stroke="#333741" stroke-width="2"/></svg>
<span style="letter-spacing:0.628px;left:1402.5px;top:1782.67125px;font:400 27.5px/38px 'Liberation Sans','Noto Sans CJK SC',sans-serif;color:#e0e0e0;-webkit-text-stroke:0.5px;">HiLog</span>
<svg style="left:1527px;top:1782px;" width="34" height="30" viewBox="0 0 34 30"><path d="M1 11 L13 1 L21 5 L9 17 Z" fill="#afb1b3"/><path d="M14 9 L30 27" stroke="#afb1b3" stroke-width="6"/></svg>
<span style="letter-spacing:0.669px;left:1568.5px;top:1782.67125px;font:400 27.5px/38px 'Liberation Sans','Noto Sans CJK SC',sans-serif;color:#e0e0e0;-webkit-text-stroke:0.5px;">Build</span>
<svg style="left:3130px;top:1782px;" width="34" height="32" viewBox="0 0 34 32"><circle cx="16.5" cy="16" r="15.5" fill="#4c9e57"/><rect x="17" y="16" width="15" height="15.5" fill="#4c9e57"/><text x="16.5" y="24" text-anchor="middle" font-family="Liberation Sans" font-weight="700" font-size="22" fill="#fff">2</text></svg>
<span style="letter-spacing:0.000px;left:3171px;top:1782.67125px;font:400 27.5px/38px 'Liberation Sans','Noto Sans CJK SC',sans-serif;color:#e0e0e0;-webkit-text-stroke:0.5px;">事件日志</span>
<svg style="left:15px;top:1834px;" width="32" height="32" viewBox="0 0 32 32"><rect x="6.3" y="2.4" width="22.4" height="22.4" fill="none" stroke="#c0c2c5" stroke-width="2.9"/><path d="M1.5 6.2 V29.5 H24.9" fill="none" stroke="#c0c2c5" stroke-width="3"/></svg>
<span style="letter-spacing:0.997px;left:77px;top:1831.8712500000001px;font:400 27.5px/38px 'Liberation Sans','Noto Sans CJK SC',sans-serif;color:#e0e0e0;-webkit-text-stroke:0.5px;">Gradle build finished in 265 ms (3 分钟 之前)</span>
<span style="letter-spacing:1.434px;left:2647.5px;top:1831.8712500000001px;font:400 27.5px/38px 'Liberation Sans','Noto Sans CJK SC',sans-serif;color:#e0e0e0;-webkit-text-stroke:0.5px;">23:40</span>
<span style="letter-spacing:-1.047px;left:2757.5px;top:1831.8712500000001px;font:400 27.5px/38px 'Liberation Sans','Noto Sans CJK SC',sans-serif;color:#e0e0e0;-webkit-text-stroke:0.5px;">LF</span>
<span style="letter-spacing:1.216px;left:2821.5px;top:1831.8712500000001px;font:400 27.5px/38px 'Liberation Sans','Noto Sans CJK SC',sans-serif;color:#7c7f85;-webkit-text-stroke:0.5px;">UTF-8</span>
<span style="letter-spacing:0.613px;left:2939px;top:1831.8712500000001px;font:400 27.5px/38px 'Liberation Sans','Noto Sans CJK SC',sans-serif;color:#e0e0e0;-webkit-text-stroke:0.5px;">4 个空格</span>
<svg style="left:3086px;top:1832px;" width="26" height="36" viewBox="0 0 26 36"><circle cx="5" cy="5" r="4" fill="#afb1b3"/><circle cx="20" cy="8" r="4" fill="#afb1b3"/><circle cx="5" cy="31" r="4" fill="#afb1b3"/><path d="M5 5 V31 M20 8 Q20 19 5 22" fill="none" stroke="#afb1b3" stroke-width="3.6"/></svg>
<span style="letter-spacing:0.909px;left:3123.5px;top:1831.8712500000001px;font:400 27.5px/38px 'Liberation Sans','Noto Sans CJK SC',sans-serif;color:#e0e0e0;-webkit-text-stroke:0.5px;">master</span>
<svg style="left:3240px;top:1834px;" width="30" height="32" viewBox="0 0 30 32"><rect x="9" y="15" width="20" height="15" fill="#afb1b3"/><path d="M3 15 V8 Q3 2 9 2 Q15 2 15 8 V15" fill="none" stroke="#afb1b3" stroke-width="3"/></svg>
<svg style="left:3303px;top:1836px;" width="30" height="30" viewBox="0 0 30 30"><circle cx="15" cy="15" r="15" fill="#5c5f65"/><path d="M15 6 V17" stroke="#333741" stroke-width="4"/><circle cx="15" cy="23" r="2.3" fill="#333741"/></svg>
<svg style="left:0px;top:1858px;" width="14" height="14" viewBox="0 0 14 14"><path d="M0 0 Q0 14 14 14 H0 Z" fill="#8c8c8c" stroke="#000" stroke-width="1.5"/></svg>
<svg style="left:3344px;top:1858px;" width="14" height="14" viewBox="0 0 14 14"><path d="M14 0 Q14 14 0 14 H14 Z" fill="#1a1a1a" stroke="#000" stroke-width="1.5"/></svg>
</body></html>
